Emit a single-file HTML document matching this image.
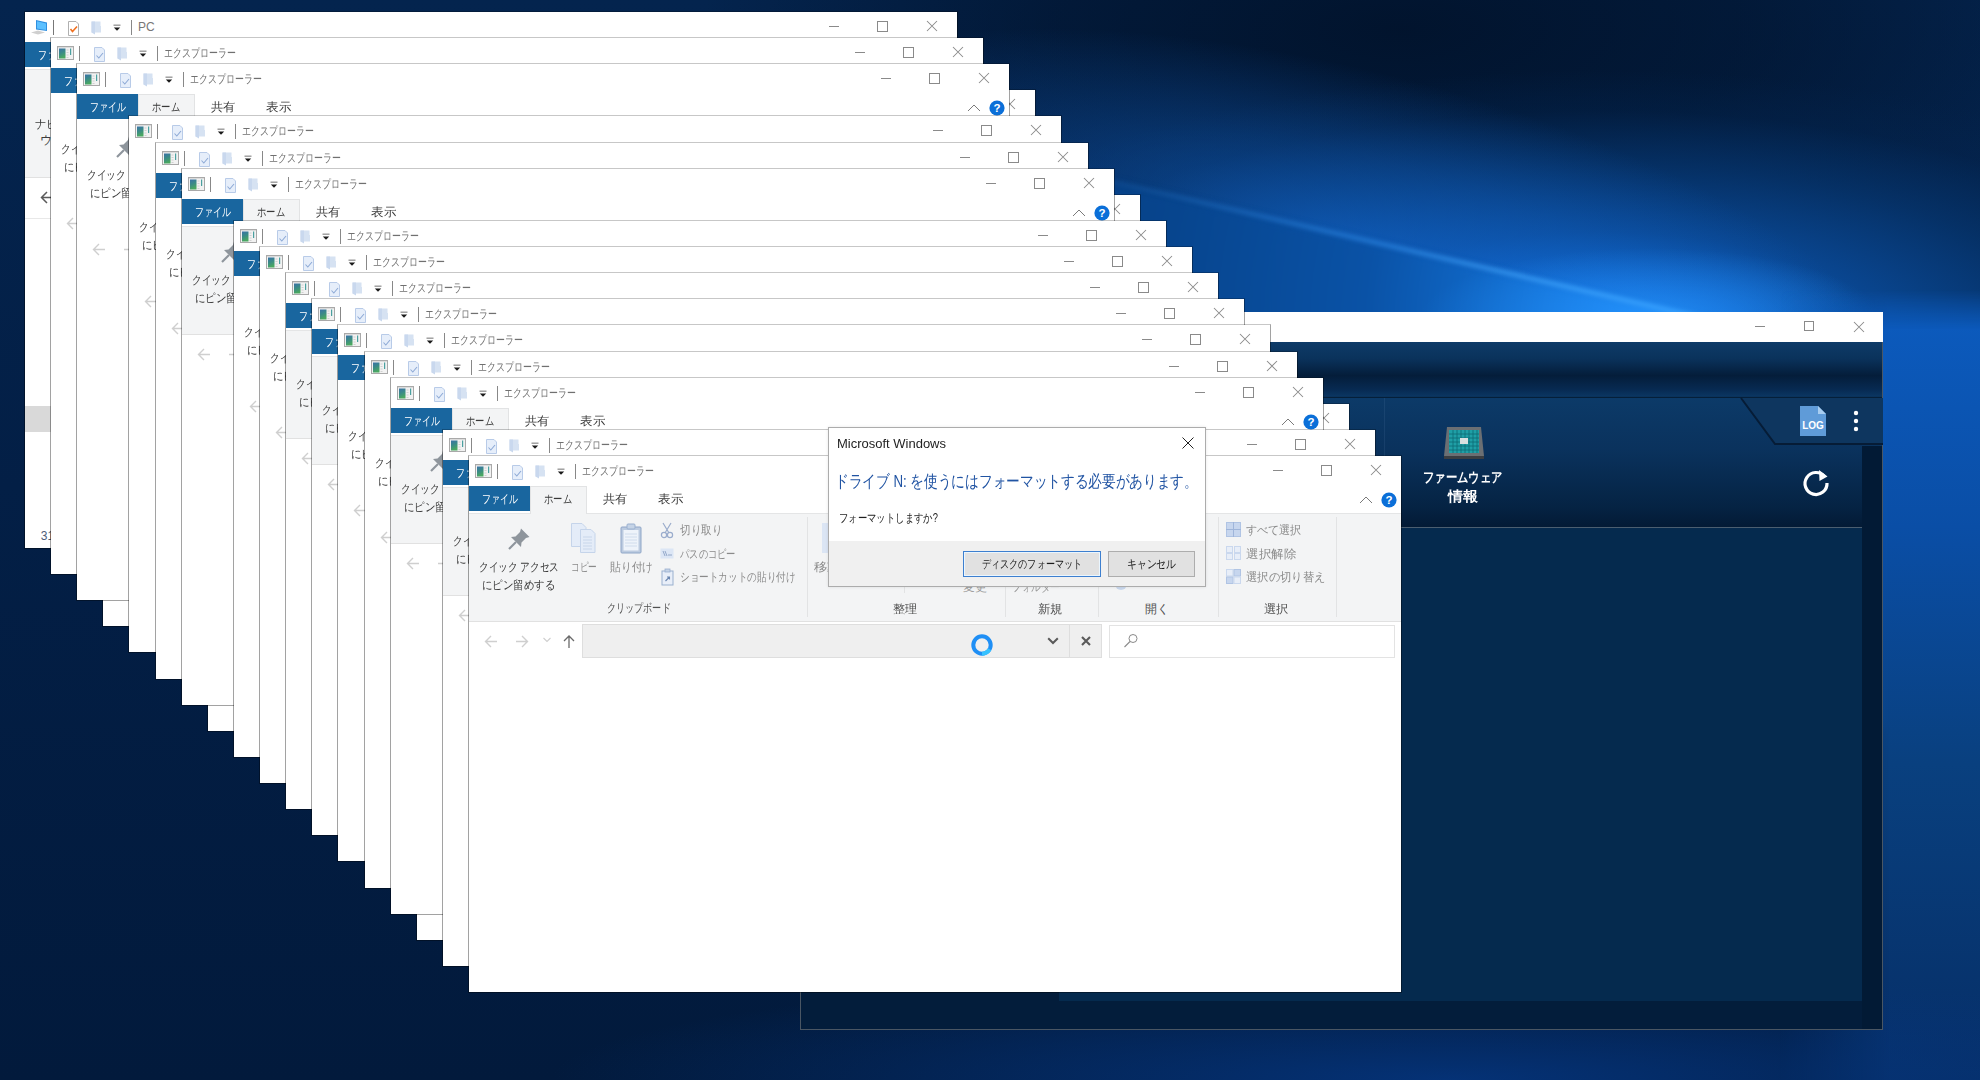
<!DOCTYPE html>
<html lang="ja"><head><meta charset="utf-8"><title>Explorer cascade</title>
<style>
html,body{margin:0;padding:0;width:1980px;height:1080px;overflow:hidden;background:#021a3d;font-family:"Liberation Sans",sans-serif}
.a{position:absolute}
.t{position:absolute;white-space:nowrap;display:block}
.win{position:absolute;width:934px;height:538px;overflow:hidden}
.in{position:absolute;left:1px;top:1px;width:932px;height:536px;overflow:hidden;background:#fff}
.bd{position:absolute;left:0;top:0;right:0;bottom:0;border:1px solid rgba(0,0,0,0.36);border-top-color:rgba(0,0,0,0.22);box-sizing:border-box;pointer-events:none}
svg{overflow:visible}
</style></head><body>
<svg width="0" height="0" style="position:absolute"><defs><linearGradient id="eg" x1="0" y1="0" x2="0.3" y2="1"><stop offset="0" stop-color="#3a72a8"/><stop offset="0.5" stop-color="#3a8a88"/><stop offset="1" stop-color="#4aa860"/></linearGradient></defs></svg>
<div class="a" style="left:0;top:0;width:1980px;height:1080px;background:linear-gradient(180deg,#04244e 0%,#031f46 45%,#021a3c 100%)"></div><div class="a" style="left:0;top:0;width:1980px;height:1080px;background:radial-gradient(ellipse 700px 260px at 1400px 30px,rgba(1,18,42,0.9) 0%,rgba(1,18,42,0.6) 50%,rgba(1,18,42,0) 100%)"></div><div class="a" style="left:0;top:0;width:1980px;height:1080px;background:radial-gradient(ellipse 720px 270px at 1600px 340px,rgba(26,136,240,1) 0%,rgba(15,104,208,0.95) 20%,rgba(10,74,152,0.9) 40%,rgba(6,54,112,0.75) 65%,rgba(3,36,78,0.4) 85%,rgba(2,27,62,0) 100%)"></div><div class="a" style="left:800px;top:60px;width:1100px;height:360px;transform:rotate(14deg);background:radial-gradient(ellipse 550px 170px at 50% 50%,rgba(20,110,220,0.55) 0%,rgba(20,110,220,0.3) 50%,rgba(20,110,220,0) 100%)"></div><div class="a" style="left:0;top:0;width:1980px;height:1080px;filter:blur(4px)"><div class="a" style="left:0;top:0;width:1980px;height:1080px;clip-path:polygon(1040px 166px,1730px 326px,1990px 360px,1990px 760px,1600px 640px,1100px 360px);background:radial-gradient(circle 800px at 1700px 326px,#1e90ff 0%,#1478e0 16%,#0a52a6 42%,#07458e 67%,#063a7a 100%)"></div></div><div class="a" style="left:0;top:0;width:1980px;height:1080px;filter:blur(2px)"><div class="a" style="left:0;top:0;width:1980px;height:1080px;clip-path:polygon(1040px 163px,1730px 322px,1730px 327px,1040px 167px);background:linear-gradient(90deg,rgba(60,160,255,0) 52%,rgba(60,160,255,0.45) 70%,rgba(80,180,255,0.9) 87%)"></div></div><div class="a" style="left:0;top:0;width:1980px;height:1080px;background:radial-gradient(ellipse 230px 70px at 1650px 318px,rgba(40,150,255,0.65) 0%,rgba(40,150,255,0) 100%)"></div><div class="a" style="left:1780px;top:290px;width:200px;height:790px;-webkit-mask-image:linear-gradient(180deg,transparent 0,#000 40px);mask-image:linear-gradient(180deg,transparent 0,#000 40px)"><div class="a" style="left:0;top:0;width:200px;height:790px;background:linear-gradient(180deg,#0c5cc0 0%,#0a4ea6 30%,#09407f 60%,#062e66 100%);-webkit-mask-image:linear-gradient(90deg,transparent 0,#000 110px);mask-image:linear-gradient(90deg,transparent 0,#000 110px)"></div></div><div class="a" style="left:0;top:0;width:1980px;height:1080px;background:radial-gradient(ellipse 900px 110px at 1450px 1080px,rgba(5,54,128,0.85) 0%,rgba(4,40,100,0) 100%)"></div><div class="a" style="left:800px;top:312px;width:1083px;height:718px;background:#031d3b;z-index:5;box-sizing:border-box;border:1px solid #4a5663;border-top:none"><div class="a" style="left:-1px;top:0px;width:1083px;height:30px;background:#fff"></div><div class="a" style="left:954px;top:14px;width:10px;height:1px;background:#8a8a8a"></div><div class="a" style="left:1003px;top:9px;width:10px;height:10px;border:1px solid #8a8a8a;box-sizing:border-box"></div><svg class="a" style="left:1052px;top:9px;" width="12" height="12" viewBox="0 0 12 12"><path d="M1 1 L11 11 M11 1 L1 11" stroke="#8a8a8a" stroke-width="1.05"/></svg><div class="a" style="left:0px;top:30px;width:1081px;height:56px;background:linear-gradient(#0e3b68 0%,#0a325b 30%,#041d3a 60%,#072a52 85%,#0b3662 97%,#021528 100%)"></div><div class="a" style="left:0px;top:86px;width:1081px;height:129px;background:linear-gradient(#0c3a68 0%,#0a325d 40%,#052343 85%,#031a35 100%)"></div><svg class="a" style="left:940px;top:86px;" width="142" height="48" viewBox="0 0 142 48"><path d="M0 0 L34 46 L142 46 L142 0 Z" fill="#0e365f"/><path d="M0 0 L34 46 L142 46" fill="none" stroke="#061c36" stroke-width="2"/></svg><svg class="a" style="left:998px;top:93px;" width="28" height="32" viewBox="0 0 28 32"><path d="M1 1 H19 L27 9 V31 H1 Z" fill="#5f9bd8"/><path d="M19 1 V9 H27 Z" fill="#a8cdf0"/><text x="14" y="24" text-anchor="middle" font-size="10" font-weight="700" fill="#fff" font-family="Liberation Sans">LOG</text></svg><svg class="a" style="left:1049px;top:96px;" width="12" height="26" viewBox="0 0 12 26"><circle cx="6" cy="5" r="2.2" fill="#fff"/><circle cx="6" cy="13" r="2.2" fill="#fff"/><circle cx="6" cy="21" r="2.2" fill="#fff"/></svg><div class="a" style="left:1061px;top:134px;width:20px;height:583px;background:#021a35"></div><svg class="a" style="left:999px;top:155px;" width="32" height="32" viewBox="0 0 32 32"><path d="M24.5 9.5 A11 11 0 1 0 27 16" fill="none" stroke="#fff" stroke-width="3.2"/><path d="M19 3 L27.5 9.5 L19.5 14 Z" fill="#fff"/></svg><svg class="a" style="left:642px;top:114px;" width="42" height="34" viewBox="0 0 42 34"><path d="M4 1 H38 L41 30 H1 Z" fill="#6b6f73"/><path d="M1 30 H41 V33 H1Z" fill="#3b3e42"/><rect x="6" y="4" width="30" height="23" fill="#1f9fa6"/><path d="M6 8 H36 M6 12 H36 M6 16 H36 M6 20 H36 M6 24 H36 M10 4 V27 M14 4 V27 M18 4 V27 M22 4 V27 M26 4 V27 M30 4 V27 M34 4 V27" stroke="#0d6b74" stroke-width="0.8"/><rect x="17" y="12" width="8" height="6" fill="#d8e0e0"/></svg><div class="a" style="left:583px;top:86px;width:1px;height:129px;background:rgba(120,160,200,0.12)"></div><div class="a" style="left:0px;top:215px;width:1061px;height:1px;background:#4b5e70"></div><div class="a" style="left:258px;top:216px;width:803px;height:473px;background:#052a4e"></div></div><span class="t" style="left:1423.2px;top:468.0px;font-size:14px;line-height:18px;color:#fff;font-weight:700;transform-origin:0 50%;transform:scaleX(0.811);z-index:6;">ファームウェア</span><span class="t" style="left:1448.0px;top:486.5px;font-size:14px;line-height:18px;color:#fff;font-weight:700;transform-origin:0 50%;transform:scaleX(1.071);z-index:6;">情報</span><div class="win" style="left:24px;top:11px;z-index:10"><div class="in"><svg class="a" style="left:5px;top:7px;" width="20" height="16" viewBox="0 0 20 16"><path d="M6 1 L17 3.5 L17 12 L6 10.5 Z" fill="#2f8fe0"/><path d="M7 2.3 L16 4.4 L16 11 L7 9.6Z" fill="#5cc0ff"/><path d="M1 13.5 L8 11.5 L15 13.5 L8 15.5 Z" fill="#cfcfcf"/></svg><div class="a" style="left:28px;top:8px;width:1px;height:15px;background:#777"></div><svg class="a" style="left:42px;top:8px;" width="13" height="17" viewBox="0 0 13 17"><path d="M1.5 1.5 H9 L11.5 4 V15.5 H1.5 Z" fill="#fff" stroke="#b0b0b0"/><path d="M3.5 9 L5.5 11.5 L10 6.5" fill="none" stroke="#f07020" stroke-width="1.6"/></svg><svg class="a" style="left:65px;top:8px;" width="12" height="17" viewBox="0 0 12 17"><path d="M1.5 1.5 H10.5 V6 H11 V12.5 H1.5 Z" fill="#d6e2f2"/><path d="M1.5 1.5 H5 V14.5 L1.5 12.5 Z" fill="#c9d8ee"/></svg><svg class="a" style="left:88px;top:12px;" width="8" height="8" viewBox="0 0 8 8"><rect x="0.5" y="0.5" width="7" height="1.4" fill="#9a9a9a"/><path d="M0.8 3.5 H7.2 L4 6.8 Z" fill="#1a1a1a"/></svg><div class="a" style="left:106px;top:8px;width:1px;height:15px;background:#888"></div><span class="t" style="left:113.0px;top:7.5px;font-size:12px;line-height:15px;color:#777;">PC</span><div class="a" style="left:804px;top:14px;width:10px;height:1px;background:#8a8a8a"></div><div class="a" style="left:852px;top:9px;width:11px;height:11px;border:1px solid #8a8a8a;box-sizing:border-box"></div><svg class="a" style="left:901px;top:8px;" width="12" height="12" viewBox="0 0 12 12"><path d="M1 1 L11 11 M11 1 L1 11" stroke="#8a8a8a" stroke-width="1.05"/></svg><div class="a" style="left:0px;top:30px;width:61px;height:25px;background:#19669f"></div><span class="t" style="left:13.0px;top:36.0px;font-size:12px;line-height:15px;color:#fff;transform-origin:0 50%;transform:scaleX(0.744);">ファイル</span><div class="a" style="left:0px;top:57px;width:932px;height:109px;background:#f3f4f5;border-top:1px solid #e4e5e6;border-bottom:1px solid #e1e1e1;box-sizing:border-box"></div><span class="t" style="left:10.3px;top:105.1px;font-size:12px;line-height:15px;color:#3c3c3c;transform-origin:0 50%;transform:scaleX(0.952);">ナビゲーション</span><span class="t" style="left:15.3px;top:121.3px;font-size:12px;line-height:15px;color:#3c3c3c;">ウィンドウ</span><svg class="a" style="left:15px;top:179px;" width="14" height="13" viewBox="0 0 14 13"><path d="M1.5 6.5 H13 M7 1 L1.5 6.5 L7 12" fill="none" stroke="#5a5a5a" stroke-width="1.5"/></svg><div class="a" style="left:0px;top:206px;width:932px;height:1px;background:#e8e8e8"></div><svg class="a" style="left:46px;top:179px;" width="14" height="13" viewBox="0 0 14 13"><path d="M12.5 6.5 H1 M7 1 L12.5 6.5 L7 12" fill="none" stroke="#c8c8c8" stroke-width="1.4"/></svg><div class="a" style="left:0px;top:394px;width:200px;height:26px;background:#d9d9d9"></div><span class="t" style="left:15.8px;top:517.2px;font-size:12px;line-height:15px;color:#4c5c78;">31 個の項目</span></div><div class="bd"></div></div><div class="win" style="left:50px;top:37px;z-index:11"><div class="in"><svg class="a" style="left:5px;top:7px;" width="18" height="16" viewBox="0 0 18 16"><rect x="1.5" y="1.5" width="16" height="13" fill="#f2f2f2" stroke="#a9a9a9"/><rect x="2" y="2" width="15" height="1" fill="#dcdcdc"/><rect x="3" y="3.5" width="6.5" height="10" fill="url(#eg)"/><rect x="14" y="3.5" width="1.2" height="6.5" fill="#4aa0a0"/><path d="M10.5 5 H12.5 M10.5 7.5 H12.5 M10.5 10 H12.5 M10.5 12.5 H12.5" stroke="#c8c8c8" stroke-width="0.8"/></svg><div class="a" style="left:28px;top:8px;width:1px;height:15px;background:#888"></div><svg class="a" style="left:42px;top:8px;" width="13" height="17" viewBox="0 0 13 17"><path d="M1.5 1.5 H9 L11.5 4 V15.5 H1.5 Z" fill="#e6eefa" stroke="#b8cbe8"/><path d="M3.5 9.5 L5.8 12 L10 7" fill="none" stroke="#8eaad6" stroke-width="1.1"/></svg><svg class="a" style="left:65px;top:8px;" width="12" height="17" viewBox="0 0 12 17"><path d="M1.5 1.5 H10.5 V6 H11 V12.5 H1.5 Z" fill="#d6e2f2"/><path d="M1.5 1.5 H5 V14.5 L1.5 12.5 Z" fill="#c9d8ee"/></svg><svg class="a" style="left:88px;top:12px;" width="8" height="8" viewBox="0 0 8 8"><rect x="0.5" y="0.5" width="7" height="1.4" fill="#9a9a9a"/><path d="M0.8 3.5 H7.2 L4 6.8 Z" fill="#1a1a1a"/></svg><div class="a" style="left:106px;top:8px;width:1px;height:15px;background:#888"></div><span class="t" style="left:113.0px;top:7.5px;font-size:12px;line-height:15px;color:#707070;transform-origin:0 50%;transform:scaleX(0.745);">エクスプローラー</span><div class="a" style="left:804px;top:14px;width:10px;height:1px;background:#8a8a8a"></div><div class="a" style="left:852px;top:9px;width:11px;height:11px;border:1px solid #8a8a8a;box-sizing:border-box"></div><svg class="a" style="left:901px;top:8px;" width="12" height="12" viewBox="0 0 12 12"><path d="M1 1 L11 11 M11 1 L1 11" stroke="#8a8a8a" stroke-width="1.05"/></svg><div class="a" style="left:0px;top:30px;width:61px;height:25px;background:#19669f"></div><span class="t" style="left:13.0px;top:36.0px;font-size:12px;line-height:15px;color:#fff;transform-origin:0 50%;transform:scaleX(0.744);">ファイル</span><span class="t" style="left:9.6px;top:104.2px;font-size:12px;line-height:15px;color:#3a3a3a;transform-origin:0 50%;transform:scaleX(0.805);">クイック アクセス</span><span class="t" style="left:13.0px;top:121.5px;font-size:12px;line-height:15px;color:#3a3a3a;transform-origin:0 50%;transform:scaleX(0.869);">にピン留めする</span><svg class="a" style="left:38px;top:71px;" width="24" height="24" viewBox="0 0 24 24"><path d="M14 1.5 L22.5 10 L19 11 L14.5 15.5 L14 20 L4 10 L8.5 9.5 L13 5 Z" fill="#8e959c"/><path d="M9 15 L2 22" stroke="#8e959c" stroke-width="2.2"/></svg><svg class="a" style="left:15px;top:179px;" width="14" height="13" viewBox="0 0 14 13"><path d="M1.5 6.5 H13 M7 1 L1.5 6.5 L7 12" fill="none" stroke="#cfcfcf" stroke-width="1.4"/></svg><svg class="a" style="left:46px;top:179px;" width="14" height="13" viewBox="0 0 14 13"><path d="M12.5 6.5 H1 M7 1 L12.5 6.5 L7 12" fill="none" stroke="#cfcfcf" stroke-width="1.4"/></svg></div><div class="bd"></div></div><div class="win" style="left:102px;top:89px;z-index:12"><div class="in"><svg class="a" style="left:5px;top:7px;" width="18" height="16" viewBox="0 0 18 16"><rect x="1.5" y="1.5" width="16" height="13" fill="#f2f2f2" stroke="#a9a9a9"/><rect x="2" y="2" width="15" height="1" fill="#dcdcdc"/><rect x="3" y="3.5" width="6.5" height="10" fill="url(#eg)"/><rect x="14" y="3.5" width="1.2" height="6.5" fill="#4aa0a0"/><path d="M10.5 5 H12.5 M10.5 7.5 H12.5 M10.5 10 H12.5 M10.5 12.5 H12.5" stroke="#c8c8c8" stroke-width="0.8"/></svg><div class="a" style="left:28px;top:8px;width:1px;height:15px;background:#888"></div><svg class="a" style="left:42px;top:8px;" width="13" height="17" viewBox="0 0 13 17"><path d="M1.5 1.5 H9 L11.5 4 V15.5 H1.5 Z" fill="#e6eefa" stroke="#b8cbe8"/><path d="M3.5 9.5 L5.8 12 L10 7" fill="none" stroke="#8eaad6" stroke-width="1.1"/></svg><svg class="a" style="left:65px;top:8px;" width="12" height="17" viewBox="0 0 12 17"><path d="M1.5 1.5 H10.5 V6 H11 V12.5 H1.5 Z" fill="#d6e2f2"/><path d="M1.5 1.5 H5 V14.5 L1.5 12.5 Z" fill="#c9d8ee"/></svg><svg class="a" style="left:88px;top:12px;" width="8" height="8" viewBox="0 0 8 8"><rect x="0.5" y="0.5" width="7" height="1.4" fill="#9a9a9a"/><path d="M0.8 3.5 H7.2 L4 6.8 Z" fill="#1a1a1a"/></svg><div class="a" style="left:106px;top:8px;width:1px;height:15px;background:#888"></div><span class="t" style="left:113.0px;top:7.5px;font-size:12px;line-height:15px;color:#707070;transform-origin:0 50%;transform:scaleX(0.745);">エクスプローラー</span><div class="a" style="left:804px;top:14px;width:10px;height:1px;background:#8a8a8a"></div><div class="a" style="left:852px;top:9px;width:11px;height:11px;border:1px solid #8a8a8a;box-sizing:border-box"></div><svg class="a" style="left:901px;top:8px;" width="12" height="12" viewBox="0 0 12 12"><path d="M1 1 L11 11 M11 1 L1 11" stroke="#8a8a8a" stroke-width="1.05"/></svg><div class="a" style="left:0px;top:30px;width:61px;height:25px;background:#19669f"></div><span class="t" style="left:13.0px;top:36.0px;font-size:12px;line-height:15px;color:#fff;transform-origin:0 50%;transform:scaleX(0.744);">ファイル</span><span class="t" style="left:9.6px;top:104.2px;font-size:12px;line-height:15px;color:#3a3a3a;transform-origin:0 50%;transform:scaleX(0.805);">クイック アクセス</span><span class="t" style="left:13.0px;top:121.5px;font-size:12px;line-height:15px;color:#3a3a3a;transform-origin:0 50%;transform:scaleX(0.869);">にピン留めする</span><svg class="a" style="left:38px;top:71px;" width="24" height="24" viewBox="0 0 24 24"><path d="M14 1.5 L22.5 10 L19 11 L14.5 15.5 L14 20 L4 10 L8.5 9.5 L13 5 Z" fill="#8e959c"/><path d="M9 15 L2 22" stroke="#8e959c" stroke-width="2.2"/></svg><svg class="a" style="left:15px;top:179px;" width="14" height="13" viewBox="0 0 14 13"><path d="M1.5 6.5 H13 M7 1 L1.5 6.5 L7 12" fill="none" stroke="#cfcfcf" stroke-width="1.4"/></svg><svg class="a" style="left:46px;top:179px;" width="14" height="13" viewBox="0 0 14 13"><path d="M12.5 6.5 H1 M7 1 L12.5 6.5 L7 12" fill="none" stroke="#cfcfcf" stroke-width="1.4"/></svg></div><div class="bd"></div></div><div class="win" style="left:76px;top:63px;z-index:13"><div class="in"><svg class="a" style="left:5px;top:7px;" width="18" height="16" viewBox="0 0 18 16"><rect x="1.5" y="1.5" width="16" height="13" fill="#f2f2f2" stroke="#a9a9a9"/><rect x="2" y="2" width="15" height="1" fill="#dcdcdc"/><rect x="3" y="3.5" width="6.5" height="10" fill="url(#eg)"/><rect x="14" y="3.5" width="1.2" height="6.5" fill="#4aa0a0"/><path d="M10.5 5 H12.5 M10.5 7.5 H12.5 M10.5 10 H12.5 M10.5 12.5 H12.5" stroke="#c8c8c8" stroke-width="0.8"/></svg><div class="a" style="left:28px;top:8px;width:1px;height:15px;background:#888"></div><svg class="a" style="left:42px;top:8px;" width="13" height="17" viewBox="0 0 13 17"><path d="M1.5 1.5 H9 L11.5 4 V15.5 H1.5 Z" fill="#e6eefa" stroke="#b8cbe8"/><path d="M3.5 9.5 L5.8 12 L10 7" fill="none" stroke="#8eaad6" stroke-width="1.1"/></svg><svg class="a" style="left:65px;top:8px;" width="12" height="17" viewBox="0 0 12 17"><path d="M1.5 1.5 H10.5 V6 H11 V12.5 H1.5 Z" fill="#d6e2f2"/><path d="M1.5 1.5 H5 V14.5 L1.5 12.5 Z" fill="#c9d8ee"/></svg><svg class="a" style="left:88px;top:12px;" width="8" height="8" viewBox="0 0 8 8"><rect x="0.5" y="0.5" width="7" height="1.4" fill="#9a9a9a"/><path d="M0.8 3.5 H7.2 L4 6.8 Z" fill="#1a1a1a"/></svg><div class="a" style="left:106px;top:8px;width:1px;height:15px;background:#888"></div><span class="t" style="left:113.0px;top:7.5px;font-size:12px;line-height:15px;color:#707070;transform-origin:0 50%;transform:scaleX(0.745);">エクスプローラー</span><div class="a" style="left:804px;top:14px;width:10px;height:1px;background:#8a8a8a"></div><div class="a" style="left:852px;top:9px;width:11px;height:11px;border:1px solid #8a8a8a;box-sizing:border-box"></div><svg class="a" style="left:901px;top:8px;" width="12" height="12" viewBox="0 0 12 12"><path d="M1 1 L11 11 M11 1 L1 11" stroke="#8a8a8a" stroke-width="1.05"/></svg><div class="a" style="left:0px;top:30px;width:61px;height:25px;background:#19669f"></div><span class="t" style="left:13.0px;top:36.0px;font-size:12px;line-height:15px;color:#fff;transform-origin:0 50%;transform:scaleX(0.744);">ファイル</span><div class="a" style="left:61px;top:30px;width:57px;height:28px;background:#f3f4f5;border:1px solid #e2e3e4;border-bottom:none;box-sizing:border-box"></div><span class="t" style="left:75.4px;top:36.2px;font-size:12px;line-height:15px;color:#383838;transform-origin:0 50%;transform:scaleX(0.778);">ホーム</span><span class="t" style="left:134.0px;top:36.2px;font-size:12px;line-height:15px;color:#383838;transform-origin:0 50%;transform:scaleX(1.017);">共有</span><span class="t" style="left:189.3px;top:36.2px;font-size:12px;line-height:15px;color:#383838;transform-origin:0 50%;transform:scaleX(1.042);">表示</span><svg class="a" style="left:890px;top:40px;" width="14" height="8" viewBox="0 0 14 8"><path d="M1 7 L7 1 L13 7" fill="none" stroke="#7a7a7a" stroke-width="1"/></svg><svg class="a" style="left:912px;top:35.5px;" width="16" height="16" viewBox="0 0 16 16"><circle cx="8" cy="8" r="7.6" fill="#0b6fd8"/><text x="8" y="12.3" text-anchor="middle" font-size="11.5" font-weight="700" fill="#fff" font-family="Liberation Sans">?</text></svg><span class="t" style="left:9.6px;top:104.2px;font-size:12px;line-height:15px;color:#3a3a3a;transform-origin:0 50%;transform:scaleX(0.805);">クイック アクセス</span><span class="t" style="left:13.0px;top:121.5px;font-size:12px;line-height:15px;color:#3a3a3a;transform-origin:0 50%;transform:scaleX(0.869);">にピン留めする</span><svg class="a" style="left:38px;top:71px;" width="24" height="24" viewBox="0 0 24 24"><path d="M14 1.5 L22.5 10 L19 11 L14.5 15.5 L14 20 L4 10 L8.5 9.5 L13 5 Z" fill="#8e959c"/><path d="M9 15 L2 22" stroke="#8e959c" stroke-width="2.2"/></svg><svg class="a" style="left:15px;top:179px;" width="14" height="13" viewBox="0 0 14 13"><path d="M1.5 6.5 H13 M7 1 L1.5 6.5 L7 12" fill="none" stroke="#cfcfcf" stroke-width="1.4"/></svg><svg class="a" style="left:46px;top:179px;" width="14" height="13" viewBox="0 0 14 13"><path d="M12.5 6.5 H1 M7 1 L12.5 6.5 L7 12" fill="none" stroke="#cfcfcf" stroke-width="1.4"/></svg></div><div class="bd"></div></div><div class="win" style="left:128px;top:115px;z-index:14"><div class="in"><svg class="a" style="left:5px;top:7px;" width="18" height="16" viewBox="0 0 18 16"><rect x="1.5" y="1.5" width="16" height="13" fill="#f2f2f2" stroke="#a9a9a9"/><rect x="2" y="2" width="15" height="1" fill="#dcdcdc"/><rect x="3" y="3.5" width="6.5" height="10" fill="url(#eg)"/><rect x="14" y="3.5" width="1.2" height="6.5" fill="#4aa0a0"/><path d="M10.5 5 H12.5 M10.5 7.5 H12.5 M10.5 10 H12.5 M10.5 12.5 H12.5" stroke="#c8c8c8" stroke-width="0.8"/></svg><div class="a" style="left:28px;top:8px;width:1px;height:15px;background:#888"></div><svg class="a" style="left:42px;top:8px;" width="13" height="17" viewBox="0 0 13 17"><path d="M1.5 1.5 H9 L11.5 4 V15.5 H1.5 Z" fill="#e6eefa" stroke="#b8cbe8"/><path d="M3.5 9.5 L5.8 12 L10 7" fill="none" stroke="#8eaad6" stroke-width="1.1"/></svg><svg class="a" style="left:65px;top:8px;" width="12" height="17" viewBox="0 0 12 17"><path d="M1.5 1.5 H10.5 V6 H11 V12.5 H1.5 Z" fill="#d6e2f2"/><path d="M1.5 1.5 H5 V14.5 L1.5 12.5 Z" fill="#c9d8ee"/></svg><svg class="a" style="left:88px;top:12px;" width="8" height="8" viewBox="0 0 8 8"><rect x="0.5" y="0.5" width="7" height="1.4" fill="#9a9a9a"/><path d="M0.8 3.5 H7.2 L4 6.8 Z" fill="#1a1a1a"/></svg><div class="a" style="left:106px;top:8px;width:1px;height:15px;background:#888"></div><span class="t" style="left:113.0px;top:7.5px;font-size:12px;line-height:15px;color:#707070;transform-origin:0 50%;transform:scaleX(0.745);">エクスプローラー</span><div class="a" style="left:804px;top:14px;width:10px;height:1px;background:#8a8a8a"></div><div class="a" style="left:852px;top:9px;width:11px;height:11px;border:1px solid #8a8a8a;box-sizing:border-box"></div><svg class="a" style="left:901px;top:8px;" width="12" height="12" viewBox="0 0 12 12"><path d="M1 1 L11 11 M11 1 L1 11" stroke="#8a8a8a" stroke-width="1.05"/></svg><span class="t" style="left:9.6px;top:104.2px;font-size:12px;line-height:15px;color:#3a3a3a;transform-origin:0 50%;transform:scaleX(0.805);">クイック アクセス</span><span class="t" style="left:13.0px;top:121.5px;font-size:12px;line-height:15px;color:#3a3a3a;transform-origin:0 50%;transform:scaleX(0.869);">にピン留めする</span><svg class="a" style="left:38px;top:71px;" width="24" height="24" viewBox="0 0 24 24"><path d="M14 1.5 L22.5 10 L19 11 L14.5 15.5 L14 20 L4 10 L8.5 9.5 L13 5 Z" fill="#8e959c"/><path d="M9 15 L2 22" stroke="#8e959c" stroke-width="2.2"/></svg><svg class="a" style="left:15px;top:179px;" width="14" height="13" viewBox="0 0 14 13"><path d="M1.5 6.5 H13 M7 1 L1.5 6.5 L7 12" fill="none" stroke="#cfcfcf" stroke-width="1.4"/></svg><svg class="a" style="left:46px;top:179px;" width="14" height="13" viewBox="0 0 14 13"><path d="M12.5 6.5 H1 M7 1 L12.5 6.5 L7 12" fill="none" stroke="#cfcfcf" stroke-width="1.4"/></svg></div><div class="bd"></div></div><div class="win" style="left:155px;top:142px;z-index:15"><div class="in"><svg class="a" style="left:5px;top:7px;" width="18" height="16" viewBox="0 0 18 16"><rect x="1.5" y="1.5" width="16" height="13" fill="#f2f2f2" stroke="#a9a9a9"/><rect x="2" y="2" width="15" height="1" fill="#dcdcdc"/><rect x="3" y="3.5" width="6.5" height="10" fill="url(#eg)"/><rect x="14" y="3.5" width="1.2" height="6.5" fill="#4aa0a0"/><path d="M10.5 5 H12.5 M10.5 7.5 H12.5 M10.5 10 H12.5 M10.5 12.5 H12.5" stroke="#c8c8c8" stroke-width="0.8"/></svg><div class="a" style="left:28px;top:8px;width:1px;height:15px;background:#888"></div><svg class="a" style="left:42px;top:8px;" width="13" height="17" viewBox="0 0 13 17"><path d="M1.5 1.5 H9 L11.5 4 V15.5 H1.5 Z" fill="#e6eefa" stroke="#b8cbe8"/><path d="M3.5 9.5 L5.8 12 L10 7" fill="none" stroke="#8eaad6" stroke-width="1.1"/></svg><svg class="a" style="left:65px;top:8px;" width="12" height="17" viewBox="0 0 12 17"><path d="M1.5 1.5 H10.5 V6 H11 V12.5 H1.5 Z" fill="#d6e2f2"/><path d="M1.5 1.5 H5 V14.5 L1.5 12.5 Z" fill="#c9d8ee"/></svg><svg class="a" style="left:88px;top:12px;" width="8" height="8" viewBox="0 0 8 8"><rect x="0.5" y="0.5" width="7" height="1.4" fill="#9a9a9a"/><path d="M0.8 3.5 H7.2 L4 6.8 Z" fill="#1a1a1a"/></svg><div class="a" style="left:106px;top:8px;width:1px;height:15px;background:#888"></div><span class="t" style="left:113.0px;top:7.5px;font-size:12px;line-height:15px;color:#707070;transform-origin:0 50%;transform:scaleX(0.745);">エクスプローラー</span><div class="a" style="left:804px;top:14px;width:10px;height:1px;background:#8a8a8a"></div><div class="a" style="left:852px;top:9px;width:11px;height:11px;border:1px solid #8a8a8a;box-sizing:border-box"></div><svg class="a" style="left:901px;top:8px;" width="12" height="12" viewBox="0 0 12 12"><path d="M1 1 L11 11 M11 1 L1 11" stroke="#8a8a8a" stroke-width="1.05"/></svg><div class="a" style="left:0px;top:30px;width:61px;height:25px;background:#19669f"></div><span class="t" style="left:13.0px;top:36.0px;font-size:12px;line-height:15px;color:#fff;transform-origin:0 50%;transform:scaleX(0.744);">ファイル</span><span class="t" style="left:9.6px;top:104.2px;font-size:12px;line-height:15px;color:#3a3a3a;transform-origin:0 50%;transform:scaleX(0.805);">クイック アクセス</span><span class="t" style="left:13.0px;top:121.5px;font-size:12px;line-height:15px;color:#3a3a3a;transform-origin:0 50%;transform:scaleX(0.869);">にピン留めする</span><svg class="a" style="left:38px;top:71px;" width="24" height="24" viewBox="0 0 24 24"><path d="M14 1.5 L22.5 10 L19 11 L14.5 15.5 L14 20 L4 10 L8.5 9.5 L13 5 Z" fill="#8e959c"/><path d="M9 15 L2 22" stroke="#8e959c" stroke-width="2.2"/></svg><svg class="a" style="left:15px;top:179px;" width="14" height="13" viewBox="0 0 14 13"><path d="M1.5 6.5 H13 M7 1 L1.5 6.5 L7 12" fill="none" stroke="#cfcfcf" stroke-width="1.4"/></svg><svg class="a" style="left:46px;top:179px;" width="14" height="13" viewBox="0 0 14 13"><path d="M12.5 6.5 H1 M7 1 L12.5 6.5 L7 12" fill="none" stroke="#cfcfcf" stroke-width="1.4"/></svg></div><div class="bd"></div></div><div class="win" style="left:207px;top:194px;z-index:16"><div class="in"><svg class="a" style="left:5px;top:7px;" width="18" height="16" viewBox="0 0 18 16"><rect x="1.5" y="1.5" width="16" height="13" fill="#f2f2f2" stroke="#a9a9a9"/><rect x="2" y="2" width="15" height="1" fill="#dcdcdc"/><rect x="3" y="3.5" width="6.5" height="10" fill="url(#eg)"/><rect x="14" y="3.5" width="1.2" height="6.5" fill="#4aa0a0"/><path d="M10.5 5 H12.5 M10.5 7.5 H12.5 M10.5 10 H12.5 M10.5 12.5 H12.5" stroke="#c8c8c8" stroke-width="0.8"/></svg><div class="a" style="left:28px;top:8px;width:1px;height:15px;background:#888"></div><svg class="a" style="left:42px;top:8px;" width="13" height="17" viewBox="0 0 13 17"><path d="M1.5 1.5 H9 L11.5 4 V15.5 H1.5 Z" fill="#e6eefa" stroke="#b8cbe8"/><path d="M3.5 9.5 L5.8 12 L10 7" fill="none" stroke="#8eaad6" stroke-width="1.1"/></svg><svg class="a" style="left:65px;top:8px;" width="12" height="17" viewBox="0 0 12 17"><path d="M1.5 1.5 H10.5 V6 H11 V12.5 H1.5 Z" fill="#d6e2f2"/><path d="M1.5 1.5 H5 V14.5 L1.5 12.5 Z" fill="#c9d8ee"/></svg><svg class="a" style="left:88px;top:12px;" width="8" height="8" viewBox="0 0 8 8"><rect x="0.5" y="0.5" width="7" height="1.4" fill="#9a9a9a"/><path d="M0.8 3.5 H7.2 L4 6.8 Z" fill="#1a1a1a"/></svg><div class="a" style="left:106px;top:8px;width:1px;height:15px;background:#888"></div><span class="t" style="left:113.0px;top:7.5px;font-size:12px;line-height:15px;color:#707070;transform-origin:0 50%;transform:scaleX(0.745);">エクスプローラー</span><div class="a" style="left:804px;top:14px;width:10px;height:1px;background:#8a8a8a"></div><div class="a" style="left:852px;top:9px;width:11px;height:11px;border:1px solid #8a8a8a;box-sizing:border-box"></div><svg class="a" style="left:901px;top:8px;" width="12" height="12" viewBox="0 0 12 12"><path d="M1 1 L11 11 M11 1 L1 11" stroke="#8a8a8a" stroke-width="1.05"/></svg><div class="a" style="left:0px;top:30px;width:61px;height:25px;background:#19669f"></div><span class="t" style="left:13.0px;top:36.0px;font-size:12px;line-height:15px;color:#fff;transform-origin:0 50%;transform:scaleX(0.744);">ファイル</span><span class="t" style="left:9.6px;top:104.2px;font-size:12px;line-height:15px;color:#3a3a3a;transform-origin:0 50%;transform:scaleX(0.805);">クイック アクセス</span><span class="t" style="left:13.0px;top:121.5px;font-size:12px;line-height:15px;color:#3a3a3a;transform-origin:0 50%;transform:scaleX(0.869);">にピン留めする</span><svg class="a" style="left:38px;top:71px;" width="24" height="24" viewBox="0 0 24 24"><path d="M14 1.5 L22.5 10 L19 11 L14.5 15.5 L14 20 L4 10 L8.5 9.5 L13 5 Z" fill="#8e959c"/><path d="M9 15 L2 22" stroke="#8e959c" stroke-width="2.2"/></svg><svg class="a" style="left:15px;top:179px;" width="14" height="13" viewBox="0 0 14 13"><path d="M1.5 6.5 H13 M7 1 L1.5 6.5 L7 12" fill="none" stroke="#cfcfcf" stroke-width="1.4"/></svg><svg class="a" style="left:46px;top:179px;" width="14" height="13" viewBox="0 0 14 13"><path d="M12.5 6.5 H1 M7 1 L12.5 6.5 L7 12" fill="none" stroke="#cfcfcf" stroke-width="1.4"/></svg></div><div class="bd"></div></div><div class="win" style="left:181px;top:168px;z-index:17"><div class="in"><svg class="a" style="left:5px;top:7px;" width="18" height="16" viewBox="0 0 18 16"><rect x="1.5" y="1.5" width="16" height="13" fill="#f2f2f2" stroke="#a9a9a9"/><rect x="2" y="2" width="15" height="1" fill="#dcdcdc"/><rect x="3" y="3.5" width="6.5" height="10" fill="url(#eg)"/><rect x="14" y="3.5" width="1.2" height="6.5" fill="#4aa0a0"/><path d="M10.5 5 H12.5 M10.5 7.5 H12.5 M10.5 10 H12.5 M10.5 12.5 H12.5" stroke="#c8c8c8" stroke-width="0.8"/></svg><div class="a" style="left:28px;top:8px;width:1px;height:15px;background:#888"></div><svg class="a" style="left:42px;top:8px;" width="13" height="17" viewBox="0 0 13 17"><path d="M1.5 1.5 H9 L11.5 4 V15.5 H1.5 Z" fill="#e6eefa" stroke="#b8cbe8"/><path d="M3.5 9.5 L5.8 12 L10 7" fill="none" stroke="#8eaad6" stroke-width="1.1"/></svg><svg class="a" style="left:65px;top:8px;" width="12" height="17" viewBox="0 0 12 17"><path d="M1.5 1.5 H10.5 V6 H11 V12.5 H1.5 Z" fill="#d6e2f2"/><path d="M1.5 1.5 H5 V14.5 L1.5 12.5 Z" fill="#c9d8ee"/></svg><svg class="a" style="left:88px;top:12px;" width="8" height="8" viewBox="0 0 8 8"><rect x="0.5" y="0.5" width="7" height="1.4" fill="#9a9a9a"/><path d="M0.8 3.5 H7.2 L4 6.8 Z" fill="#1a1a1a"/></svg><div class="a" style="left:106px;top:8px;width:1px;height:15px;background:#888"></div><span class="t" style="left:113.0px;top:7.5px;font-size:12px;line-height:15px;color:#707070;transform-origin:0 50%;transform:scaleX(0.745);">エクスプローラー</span><div class="a" style="left:804px;top:14px;width:10px;height:1px;background:#8a8a8a"></div><div class="a" style="left:852px;top:9px;width:11px;height:11px;border:1px solid #8a8a8a;box-sizing:border-box"></div><svg class="a" style="left:901px;top:8px;" width="12" height="12" viewBox="0 0 12 12"><path d="M1 1 L11 11 M11 1 L1 11" stroke="#8a8a8a" stroke-width="1.05"/></svg><div class="a" style="left:0px;top:30px;width:61px;height:25px;background:#19669f"></div><span class="t" style="left:13.0px;top:36.0px;font-size:12px;line-height:15px;color:#fff;transform-origin:0 50%;transform:scaleX(0.744);">ファイル</span><div class="a" style="left:0px;top:57px;width:932px;height:109px;background:#f3f4f5;border-top:1px solid #e4e5e6;border-bottom:1px solid #e1e1e1;box-sizing:border-box"></div><div class="a" style="left:61px;top:30px;width:57px;height:28px;background:#f3f4f5;border:1px solid #e2e3e4;border-bottom:none;box-sizing:border-box"></div><span class="t" style="left:75.4px;top:36.2px;font-size:12px;line-height:15px;color:#383838;transform-origin:0 50%;transform:scaleX(0.778);">ホーム</span><span class="t" style="left:134.0px;top:36.2px;font-size:12px;line-height:15px;color:#383838;transform-origin:0 50%;transform:scaleX(1.017);">共有</span><span class="t" style="left:189.3px;top:36.2px;font-size:12px;line-height:15px;color:#383838;transform-origin:0 50%;transform:scaleX(1.042);">表示</span><svg class="a" style="left:890px;top:40px;" width="14" height="8" viewBox="0 0 14 8"><path d="M1 7 L7 1 L13 7" fill="none" stroke="#7a7a7a" stroke-width="1"/></svg><svg class="a" style="left:912px;top:35.5px;" width="16" height="16" viewBox="0 0 16 16"><circle cx="8" cy="8" r="7.6" fill="#0b6fd8"/><text x="8" y="12.3" text-anchor="middle" font-size="11.5" font-weight="700" fill="#fff" font-family="Liberation Sans">?</text></svg><span class="t" style="left:9.6px;top:104.2px;font-size:12px;line-height:15px;color:#3a3a3a;transform-origin:0 50%;transform:scaleX(0.805);">クイック アクセス</span><span class="t" style="left:13.0px;top:121.5px;font-size:12px;line-height:15px;color:#3a3a3a;transform-origin:0 50%;transform:scaleX(0.869);">にピン留めする</span><svg class="a" style="left:38px;top:71px;" width="24" height="24" viewBox="0 0 24 24"><path d="M14 1.5 L22.5 10 L19 11 L14.5 15.5 L14 20 L4 10 L8.5 9.5 L13 5 Z" fill="#8e959c"/><path d="M9 15 L2 22" stroke="#8e959c" stroke-width="2.2"/></svg><svg class="a" style="left:15px;top:179px;" width="14" height="13" viewBox="0 0 14 13"><path d="M1.5 6.5 H13 M7 1 L1.5 6.5 L7 12" fill="none" stroke="#cfcfcf" stroke-width="1.4"/></svg><svg class="a" style="left:46px;top:179px;" width="14" height="13" viewBox="0 0 14 13"><path d="M12.5 6.5 H1 M7 1 L12.5 6.5 L7 12" fill="none" stroke="#cfcfcf" stroke-width="1.4"/></svg></div><div class="bd"></div></div><div class="win" style="left:233px;top:220px;z-index:18"><div class="in"><svg class="a" style="left:5px;top:7px;" width="18" height="16" viewBox="0 0 18 16"><rect x="1.5" y="1.5" width="16" height="13" fill="#f2f2f2" stroke="#a9a9a9"/><rect x="2" y="2" width="15" height="1" fill="#dcdcdc"/><rect x="3" y="3.5" width="6.5" height="10" fill="url(#eg)"/><rect x="14" y="3.5" width="1.2" height="6.5" fill="#4aa0a0"/><path d="M10.5 5 H12.5 M10.5 7.5 H12.5 M10.5 10 H12.5 M10.5 12.5 H12.5" stroke="#c8c8c8" stroke-width="0.8"/></svg><div class="a" style="left:28px;top:8px;width:1px;height:15px;background:#888"></div><svg class="a" style="left:42px;top:8px;" width="13" height="17" viewBox="0 0 13 17"><path d="M1.5 1.5 H9 L11.5 4 V15.5 H1.5 Z" fill="#e6eefa" stroke="#b8cbe8"/><path d="M3.5 9.5 L5.8 12 L10 7" fill="none" stroke="#8eaad6" stroke-width="1.1"/></svg><svg class="a" style="left:65px;top:8px;" width="12" height="17" viewBox="0 0 12 17"><path d="M1.5 1.5 H10.5 V6 H11 V12.5 H1.5 Z" fill="#d6e2f2"/><path d="M1.5 1.5 H5 V14.5 L1.5 12.5 Z" fill="#c9d8ee"/></svg><svg class="a" style="left:88px;top:12px;" width="8" height="8" viewBox="0 0 8 8"><rect x="0.5" y="0.5" width="7" height="1.4" fill="#9a9a9a"/><path d="M0.8 3.5 H7.2 L4 6.8 Z" fill="#1a1a1a"/></svg><div class="a" style="left:106px;top:8px;width:1px;height:15px;background:#888"></div><span class="t" style="left:113.0px;top:7.5px;font-size:12px;line-height:15px;color:#707070;transform-origin:0 50%;transform:scaleX(0.745);">エクスプローラー</span><div class="a" style="left:804px;top:14px;width:10px;height:1px;background:#8a8a8a"></div><div class="a" style="left:852px;top:9px;width:11px;height:11px;border:1px solid #8a8a8a;box-sizing:border-box"></div><svg class="a" style="left:901px;top:8px;" width="12" height="12" viewBox="0 0 12 12"><path d="M1 1 L11 11 M11 1 L1 11" stroke="#8a8a8a" stroke-width="1.05"/></svg><div class="a" style="left:0px;top:30px;width:61px;height:25px;background:#19669f"></div><span class="t" style="left:13.0px;top:36.0px;font-size:12px;line-height:15px;color:#fff;transform-origin:0 50%;transform:scaleX(0.744);">ファイル</span><span class="t" style="left:9.6px;top:104.2px;font-size:12px;line-height:15px;color:#3a3a3a;transform-origin:0 50%;transform:scaleX(0.805);">クイック アクセス</span><span class="t" style="left:13.0px;top:121.5px;font-size:12px;line-height:15px;color:#3a3a3a;transform-origin:0 50%;transform:scaleX(0.869);">にピン留めする</span><svg class="a" style="left:38px;top:71px;" width="24" height="24" viewBox="0 0 24 24"><path d="M14 1.5 L22.5 10 L19 11 L14.5 15.5 L14 20 L4 10 L8.5 9.5 L13 5 Z" fill="#8e959c"/><path d="M9 15 L2 22" stroke="#8e959c" stroke-width="2.2"/></svg><svg class="a" style="left:15px;top:179px;" width="14" height="13" viewBox="0 0 14 13"><path d="M1.5 6.5 H13 M7 1 L1.5 6.5 L7 12" fill="none" stroke="#cfcfcf" stroke-width="1.4"/></svg><svg class="a" style="left:46px;top:179px;" width="14" height="13" viewBox="0 0 14 13"><path d="M12.5 6.5 H1 M7 1 L12.5 6.5 L7 12" fill="none" stroke="#cfcfcf" stroke-width="1.4"/></svg></div><div class="bd"></div></div><div class="win" style="left:259px;top:246px;z-index:19"><div class="in"><svg class="a" style="left:5px;top:7px;" width="18" height="16" viewBox="0 0 18 16"><rect x="1.5" y="1.5" width="16" height="13" fill="#f2f2f2" stroke="#a9a9a9"/><rect x="2" y="2" width="15" height="1" fill="#dcdcdc"/><rect x="3" y="3.5" width="6.5" height="10" fill="url(#eg)"/><rect x="14" y="3.5" width="1.2" height="6.5" fill="#4aa0a0"/><path d="M10.5 5 H12.5 M10.5 7.5 H12.5 M10.5 10 H12.5 M10.5 12.5 H12.5" stroke="#c8c8c8" stroke-width="0.8"/></svg><div class="a" style="left:28px;top:8px;width:1px;height:15px;background:#888"></div><svg class="a" style="left:42px;top:8px;" width="13" height="17" viewBox="0 0 13 17"><path d="M1.5 1.5 H9 L11.5 4 V15.5 H1.5 Z" fill="#e6eefa" stroke="#b8cbe8"/><path d="M3.5 9.5 L5.8 12 L10 7" fill="none" stroke="#8eaad6" stroke-width="1.1"/></svg><svg class="a" style="left:65px;top:8px;" width="12" height="17" viewBox="0 0 12 17"><path d="M1.5 1.5 H10.5 V6 H11 V12.5 H1.5 Z" fill="#d6e2f2"/><path d="M1.5 1.5 H5 V14.5 L1.5 12.5 Z" fill="#c9d8ee"/></svg><svg class="a" style="left:88px;top:12px;" width="8" height="8" viewBox="0 0 8 8"><rect x="0.5" y="0.5" width="7" height="1.4" fill="#9a9a9a"/><path d="M0.8 3.5 H7.2 L4 6.8 Z" fill="#1a1a1a"/></svg><div class="a" style="left:106px;top:8px;width:1px;height:15px;background:#888"></div><span class="t" style="left:113.0px;top:7.5px;font-size:12px;line-height:15px;color:#707070;transform-origin:0 50%;transform:scaleX(0.745);">エクスプローラー</span><div class="a" style="left:804px;top:14px;width:10px;height:1px;background:#8a8a8a"></div><div class="a" style="left:852px;top:9px;width:11px;height:11px;border:1px solid #8a8a8a;box-sizing:border-box"></div><svg class="a" style="left:901px;top:8px;" width="12" height="12" viewBox="0 0 12 12"><path d="M1 1 L11 11 M11 1 L1 11" stroke="#8a8a8a" stroke-width="1.05"/></svg><span class="t" style="left:9.6px;top:104.2px;font-size:12px;line-height:15px;color:#3a3a3a;transform-origin:0 50%;transform:scaleX(0.805);">クイック アクセス</span><span class="t" style="left:13.0px;top:121.5px;font-size:12px;line-height:15px;color:#3a3a3a;transform-origin:0 50%;transform:scaleX(0.869);">にピン留めする</span><svg class="a" style="left:38px;top:71px;" width="24" height="24" viewBox="0 0 24 24"><path d="M14 1.5 L22.5 10 L19 11 L14.5 15.5 L14 20 L4 10 L8.5 9.5 L13 5 Z" fill="#8e959c"/><path d="M9 15 L2 22" stroke="#8e959c" stroke-width="2.2"/></svg><svg class="a" style="left:15px;top:179px;" width="14" height="13" viewBox="0 0 14 13"><path d="M1.5 6.5 H13 M7 1 L1.5 6.5 L7 12" fill="none" stroke="#cfcfcf" stroke-width="1.4"/></svg><svg class="a" style="left:46px;top:179px;" width="14" height="13" viewBox="0 0 14 13"><path d="M12.5 6.5 H1 M7 1 L12.5 6.5 L7 12" fill="none" stroke="#cfcfcf" stroke-width="1.4"/></svg></div><div class="bd"></div></div><div class="win" style="left:285px;top:272px;z-index:20"><div class="in"><svg class="a" style="left:5px;top:7px;" width="18" height="16" viewBox="0 0 18 16"><rect x="1.5" y="1.5" width="16" height="13" fill="#f2f2f2" stroke="#a9a9a9"/><rect x="2" y="2" width="15" height="1" fill="#dcdcdc"/><rect x="3" y="3.5" width="6.5" height="10" fill="url(#eg)"/><rect x="14" y="3.5" width="1.2" height="6.5" fill="#4aa0a0"/><path d="M10.5 5 H12.5 M10.5 7.5 H12.5 M10.5 10 H12.5 M10.5 12.5 H12.5" stroke="#c8c8c8" stroke-width="0.8"/></svg><div class="a" style="left:28px;top:8px;width:1px;height:15px;background:#888"></div><svg class="a" style="left:42px;top:8px;" width="13" height="17" viewBox="0 0 13 17"><path d="M1.5 1.5 H9 L11.5 4 V15.5 H1.5 Z" fill="#e6eefa" stroke="#b8cbe8"/><path d="M3.5 9.5 L5.8 12 L10 7" fill="none" stroke="#8eaad6" stroke-width="1.1"/></svg><svg class="a" style="left:65px;top:8px;" width="12" height="17" viewBox="0 0 12 17"><path d="M1.5 1.5 H10.5 V6 H11 V12.5 H1.5 Z" fill="#d6e2f2"/><path d="M1.5 1.5 H5 V14.5 L1.5 12.5 Z" fill="#c9d8ee"/></svg><svg class="a" style="left:88px;top:12px;" width="8" height="8" viewBox="0 0 8 8"><rect x="0.5" y="0.5" width="7" height="1.4" fill="#9a9a9a"/><path d="M0.8 3.5 H7.2 L4 6.8 Z" fill="#1a1a1a"/></svg><div class="a" style="left:106px;top:8px;width:1px;height:15px;background:#888"></div><span class="t" style="left:113.0px;top:7.5px;font-size:12px;line-height:15px;color:#707070;transform-origin:0 50%;transform:scaleX(0.745);">エクスプローラー</span><div class="a" style="left:804px;top:14px;width:10px;height:1px;background:#8a8a8a"></div><div class="a" style="left:852px;top:9px;width:11px;height:11px;border:1px solid #8a8a8a;box-sizing:border-box"></div><svg class="a" style="left:901px;top:8px;" width="12" height="12" viewBox="0 0 12 12"><path d="M1 1 L11 11 M11 1 L1 11" stroke="#8a8a8a" stroke-width="1.05"/></svg><div class="a" style="left:0px;top:30px;width:61px;height:25px;background:#19669f"></div><span class="t" style="left:13.0px;top:36.0px;font-size:12px;line-height:15px;color:#fff;transform-origin:0 50%;transform:scaleX(0.744);">ファイル</span><div class="a" style="left:0px;top:57px;width:932px;height:109px;background:#f3f4f5;border-top:1px solid #e4e5e6;border-bottom:1px solid #e1e1e1;box-sizing:border-box"></div><span class="t" style="left:9.6px;top:104.2px;font-size:12px;line-height:15px;color:#3a3a3a;transform-origin:0 50%;transform:scaleX(0.805);">クイック アクセス</span><span class="t" style="left:13.0px;top:121.5px;font-size:12px;line-height:15px;color:#3a3a3a;transform-origin:0 50%;transform:scaleX(0.869);">にピン留めする</span><svg class="a" style="left:38px;top:71px;" width="24" height="24" viewBox="0 0 24 24"><path d="M14 1.5 L22.5 10 L19 11 L14.5 15.5 L14 20 L4 10 L8.5 9.5 L13 5 Z" fill="#8e959c"/><path d="M9 15 L2 22" stroke="#8e959c" stroke-width="2.2"/></svg><svg class="a" style="left:15px;top:179px;" width="14" height="13" viewBox="0 0 14 13"><path d="M1.5 6.5 H13 M7 1 L1.5 6.5 L7 12" fill="none" stroke="#cfcfcf" stroke-width="1.4"/></svg><svg class="a" style="left:46px;top:179px;" width="14" height="13" viewBox="0 0 14 13"><path d="M12.5 6.5 H1 M7 1 L12.5 6.5 L7 12" fill="none" stroke="#cfcfcf" stroke-width="1.4"/></svg></div><div class="bd"></div></div><div class="win" style="left:311px;top:298px;z-index:21"><div class="in"><svg class="a" style="left:5px;top:7px;" width="18" height="16" viewBox="0 0 18 16"><rect x="1.5" y="1.5" width="16" height="13" fill="#f2f2f2" stroke="#a9a9a9"/><rect x="2" y="2" width="15" height="1" fill="#dcdcdc"/><rect x="3" y="3.5" width="6.5" height="10" fill="url(#eg)"/><rect x="14" y="3.5" width="1.2" height="6.5" fill="#4aa0a0"/><path d="M10.5 5 H12.5 M10.5 7.5 H12.5 M10.5 10 H12.5 M10.5 12.5 H12.5" stroke="#c8c8c8" stroke-width="0.8"/></svg><div class="a" style="left:28px;top:8px;width:1px;height:15px;background:#888"></div><svg class="a" style="left:42px;top:8px;" width="13" height="17" viewBox="0 0 13 17"><path d="M1.5 1.5 H9 L11.5 4 V15.5 H1.5 Z" fill="#e6eefa" stroke="#b8cbe8"/><path d="M3.5 9.5 L5.8 12 L10 7" fill="none" stroke="#8eaad6" stroke-width="1.1"/></svg><svg class="a" style="left:65px;top:8px;" width="12" height="17" viewBox="0 0 12 17"><path d="M1.5 1.5 H10.5 V6 H11 V12.5 H1.5 Z" fill="#d6e2f2"/><path d="M1.5 1.5 H5 V14.5 L1.5 12.5 Z" fill="#c9d8ee"/></svg><svg class="a" style="left:88px;top:12px;" width="8" height="8" viewBox="0 0 8 8"><rect x="0.5" y="0.5" width="7" height="1.4" fill="#9a9a9a"/><path d="M0.8 3.5 H7.2 L4 6.8 Z" fill="#1a1a1a"/></svg><div class="a" style="left:106px;top:8px;width:1px;height:15px;background:#888"></div><span class="t" style="left:113.0px;top:7.5px;font-size:12px;line-height:15px;color:#707070;transform-origin:0 50%;transform:scaleX(0.745);">エクスプローラー</span><div class="a" style="left:804px;top:14px;width:10px;height:1px;background:#8a8a8a"></div><div class="a" style="left:852px;top:9px;width:11px;height:11px;border:1px solid #8a8a8a;box-sizing:border-box"></div><svg class="a" style="left:901px;top:8px;" width="12" height="12" viewBox="0 0 12 12"><path d="M1 1 L11 11 M11 1 L1 11" stroke="#8a8a8a" stroke-width="1.05"/></svg><div class="a" style="left:0px;top:30px;width:61px;height:25px;background:#19669f"></div><span class="t" style="left:13.0px;top:36.0px;font-size:12px;line-height:15px;color:#fff;transform-origin:0 50%;transform:scaleX(0.744);">ファイル</span><div class="a" style="left:0px;top:57px;width:932px;height:109px;background:#f3f4f5;border-top:1px solid #e4e5e6;border-bottom:1px solid #e1e1e1;box-sizing:border-box"></div><span class="t" style="left:9.6px;top:104.2px;font-size:12px;line-height:15px;color:#3a3a3a;transform-origin:0 50%;transform:scaleX(0.805);">クイック アクセス</span><span class="t" style="left:13.0px;top:121.5px;font-size:12px;line-height:15px;color:#3a3a3a;transform-origin:0 50%;transform:scaleX(0.869);">にピン留めする</span><svg class="a" style="left:38px;top:71px;" width="24" height="24" viewBox="0 0 24 24"><path d="M14 1.5 L22.5 10 L19 11 L14.5 15.5 L14 20 L4 10 L8.5 9.5 L13 5 Z" fill="#8e959c"/><path d="M9 15 L2 22" stroke="#8e959c" stroke-width="2.2"/></svg><svg class="a" style="left:15px;top:179px;" width="14" height="13" viewBox="0 0 14 13"><path d="M1.5 6.5 H13 M7 1 L1.5 6.5 L7 12" fill="none" stroke="#cfcfcf" stroke-width="1.4"/></svg><svg class="a" style="left:46px;top:179px;" width="14" height="13" viewBox="0 0 14 13"><path d="M12.5 6.5 H1 M7 1 L12.5 6.5 L7 12" fill="none" stroke="#cfcfcf" stroke-width="1.4"/></svg></div><div class="bd"></div></div><div class="win" style="left:337px;top:324px;z-index:22"><div class="in"><svg class="a" style="left:5px;top:7px;" width="18" height="16" viewBox="0 0 18 16"><rect x="1.5" y="1.5" width="16" height="13" fill="#f2f2f2" stroke="#a9a9a9"/><rect x="2" y="2" width="15" height="1" fill="#dcdcdc"/><rect x="3" y="3.5" width="6.5" height="10" fill="url(#eg)"/><rect x="14" y="3.5" width="1.2" height="6.5" fill="#4aa0a0"/><path d="M10.5 5 H12.5 M10.5 7.5 H12.5 M10.5 10 H12.5 M10.5 12.5 H12.5" stroke="#c8c8c8" stroke-width="0.8"/></svg><div class="a" style="left:28px;top:8px;width:1px;height:15px;background:#888"></div><svg class="a" style="left:42px;top:8px;" width="13" height="17" viewBox="0 0 13 17"><path d="M1.5 1.5 H9 L11.5 4 V15.5 H1.5 Z" fill="#e6eefa" stroke="#b8cbe8"/><path d="M3.5 9.5 L5.8 12 L10 7" fill="none" stroke="#8eaad6" stroke-width="1.1"/></svg><svg class="a" style="left:65px;top:8px;" width="12" height="17" viewBox="0 0 12 17"><path d="M1.5 1.5 H10.5 V6 H11 V12.5 H1.5 Z" fill="#d6e2f2"/><path d="M1.5 1.5 H5 V14.5 L1.5 12.5 Z" fill="#c9d8ee"/></svg><svg class="a" style="left:88px;top:12px;" width="8" height="8" viewBox="0 0 8 8"><rect x="0.5" y="0.5" width="7" height="1.4" fill="#9a9a9a"/><path d="M0.8 3.5 H7.2 L4 6.8 Z" fill="#1a1a1a"/></svg><div class="a" style="left:106px;top:8px;width:1px;height:15px;background:#888"></div><span class="t" style="left:113.0px;top:7.5px;font-size:12px;line-height:15px;color:#707070;transform-origin:0 50%;transform:scaleX(0.745);">エクスプローラー</span><div class="a" style="left:804px;top:14px;width:10px;height:1px;background:#8a8a8a"></div><div class="a" style="left:852px;top:9px;width:11px;height:11px;border:1px solid #8a8a8a;box-sizing:border-box"></div><svg class="a" style="left:901px;top:8px;" width="12" height="12" viewBox="0 0 12 12"><path d="M1 1 L11 11 M11 1 L1 11" stroke="#8a8a8a" stroke-width="1.05"/></svg><div class="a" style="left:0px;top:30px;width:61px;height:25px;background:#19669f"></div><span class="t" style="left:13.0px;top:36.0px;font-size:12px;line-height:15px;color:#fff;transform-origin:0 50%;transform:scaleX(0.744);">ファイル</span><span class="t" style="left:9.6px;top:104.2px;font-size:12px;line-height:15px;color:#3a3a3a;transform-origin:0 50%;transform:scaleX(0.805);">クイック アクセス</span><span class="t" style="left:13.0px;top:121.5px;font-size:12px;line-height:15px;color:#3a3a3a;transform-origin:0 50%;transform:scaleX(0.869);">にピン留めする</span><svg class="a" style="left:38px;top:71px;" width="24" height="24" viewBox="0 0 24 24"><path d="M14 1.5 L22.5 10 L19 11 L14.5 15.5 L14 20 L4 10 L8.5 9.5 L13 5 Z" fill="#8e959c"/><path d="M9 15 L2 22" stroke="#8e959c" stroke-width="2.2"/></svg><svg class="a" style="left:15px;top:179px;" width="14" height="13" viewBox="0 0 14 13"><path d="M1.5 6.5 H13 M7 1 L1.5 6.5 L7 12" fill="none" stroke="#cfcfcf" stroke-width="1.4"/></svg><svg class="a" style="left:46px;top:179px;" width="14" height="13" viewBox="0 0 14 13"><path d="M12.5 6.5 H1 M7 1 L12.5 6.5 L7 12" fill="none" stroke="#cfcfcf" stroke-width="1.4"/></svg></div><div class="bd"></div></div><div class="win" style="left:364px;top:351px;z-index:23"><div class="in"><svg class="a" style="left:5px;top:7px;" width="18" height="16" viewBox="0 0 18 16"><rect x="1.5" y="1.5" width="16" height="13" fill="#f2f2f2" stroke="#a9a9a9"/><rect x="2" y="2" width="15" height="1" fill="#dcdcdc"/><rect x="3" y="3.5" width="6.5" height="10" fill="url(#eg)"/><rect x="14" y="3.5" width="1.2" height="6.5" fill="#4aa0a0"/><path d="M10.5 5 H12.5 M10.5 7.5 H12.5 M10.5 10 H12.5 M10.5 12.5 H12.5" stroke="#c8c8c8" stroke-width="0.8"/></svg><div class="a" style="left:28px;top:8px;width:1px;height:15px;background:#888"></div><svg class="a" style="left:42px;top:8px;" width="13" height="17" viewBox="0 0 13 17"><path d="M1.5 1.5 H9 L11.5 4 V15.5 H1.5 Z" fill="#e6eefa" stroke="#b8cbe8"/><path d="M3.5 9.5 L5.8 12 L10 7" fill="none" stroke="#8eaad6" stroke-width="1.1"/></svg><svg class="a" style="left:65px;top:8px;" width="12" height="17" viewBox="0 0 12 17"><path d="M1.5 1.5 H10.5 V6 H11 V12.5 H1.5 Z" fill="#d6e2f2"/><path d="M1.5 1.5 H5 V14.5 L1.5 12.5 Z" fill="#c9d8ee"/></svg><svg class="a" style="left:88px;top:12px;" width="8" height="8" viewBox="0 0 8 8"><rect x="0.5" y="0.5" width="7" height="1.4" fill="#9a9a9a"/><path d="M0.8 3.5 H7.2 L4 6.8 Z" fill="#1a1a1a"/></svg><div class="a" style="left:106px;top:8px;width:1px;height:15px;background:#888"></div><span class="t" style="left:113.0px;top:7.5px;font-size:12px;line-height:15px;color:#707070;transform-origin:0 50%;transform:scaleX(0.745);">エクスプローラー</span><div class="a" style="left:804px;top:14px;width:10px;height:1px;background:#8a8a8a"></div><div class="a" style="left:852px;top:9px;width:11px;height:11px;border:1px solid #8a8a8a;box-sizing:border-box"></div><svg class="a" style="left:901px;top:8px;" width="12" height="12" viewBox="0 0 12 12"><path d="M1 1 L11 11 M11 1 L1 11" stroke="#8a8a8a" stroke-width="1.05"/></svg><span class="t" style="left:9.6px;top:104.2px;font-size:12px;line-height:15px;color:#3a3a3a;transform-origin:0 50%;transform:scaleX(0.805);">クイック アクセス</span><span class="t" style="left:13.0px;top:121.5px;font-size:12px;line-height:15px;color:#3a3a3a;transform-origin:0 50%;transform:scaleX(0.869);">にピン留めする</span><svg class="a" style="left:38px;top:71px;" width="24" height="24" viewBox="0 0 24 24"><path d="M14 1.5 L22.5 10 L19 11 L14.5 15.5 L14 20 L4 10 L8.5 9.5 L13 5 Z" fill="#8e959c"/><path d="M9 15 L2 22" stroke="#8e959c" stroke-width="2.2"/></svg><svg class="a" style="left:15px;top:179px;" width="14" height="13" viewBox="0 0 14 13"><path d="M1.5 6.5 H13 M7 1 L1.5 6.5 L7 12" fill="none" stroke="#cfcfcf" stroke-width="1.4"/></svg><svg class="a" style="left:46px;top:179px;" width="14" height="13" viewBox="0 0 14 13"><path d="M12.5 6.5 H1 M7 1 L12.5 6.5 L7 12" fill="none" stroke="#cfcfcf" stroke-width="1.4"/></svg></div><div class="bd"></div></div><div class="win" style="left:416px;top:403px;z-index:24"><div class="in"><svg class="a" style="left:5px;top:7px;" width="18" height="16" viewBox="0 0 18 16"><rect x="1.5" y="1.5" width="16" height="13" fill="#f2f2f2" stroke="#a9a9a9"/><rect x="2" y="2" width="15" height="1" fill="#dcdcdc"/><rect x="3" y="3.5" width="6.5" height="10" fill="url(#eg)"/><rect x="14" y="3.5" width="1.2" height="6.5" fill="#4aa0a0"/><path d="M10.5 5 H12.5 M10.5 7.5 H12.5 M10.5 10 H12.5 M10.5 12.5 H12.5" stroke="#c8c8c8" stroke-width="0.8"/></svg><div class="a" style="left:28px;top:8px;width:1px;height:15px;background:#888"></div><svg class="a" style="left:42px;top:8px;" width="13" height="17" viewBox="0 0 13 17"><path d="M1.5 1.5 H9 L11.5 4 V15.5 H1.5 Z" fill="#e6eefa" stroke="#b8cbe8"/><path d="M3.5 9.5 L5.8 12 L10 7" fill="none" stroke="#8eaad6" stroke-width="1.1"/></svg><svg class="a" style="left:65px;top:8px;" width="12" height="17" viewBox="0 0 12 17"><path d="M1.5 1.5 H10.5 V6 H11 V12.5 H1.5 Z" fill="#d6e2f2"/><path d="M1.5 1.5 H5 V14.5 L1.5 12.5 Z" fill="#c9d8ee"/></svg><svg class="a" style="left:88px;top:12px;" width="8" height="8" viewBox="0 0 8 8"><rect x="0.5" y="0.5" width="7" height="1.4" fill="#9a9a9a"/><path d="M0.8 3.5 H7.2 L4 6.8 Z" fill="#1a1a1a"/></svg><div class="a" style="left:106px;top:8px;width:1px;height:15px;background:#888"></div><span class="t" style="left:113.0px;top:7.5px;font-size:12px;line-height:15px;color:#707070;transform-origin:0 50%;transform:scaleX(0.745);">エクスプローラー</span><div class="a" style="left:804px;top:14px;width:10px;height:1px;background:#8a8a8a"></div><div class="a" style="left:852px;top:9px;width:11px;height:11px;border:1px solid #8a8a8a;box-sizing:border-box"></div><svg class="a" style="left:901px;top:8px;" width="12" height="12" viewBox="0 0 12 12"><path d="M1 1 L11 11 M11 1 L1 11" stroke="#8a8a8a" stroke-width="1.05"/></svg><div class="a" style="left:0px;top:30px;width:61px;height:25px;background:#19669f"></div><span class="t" style="left:13.0px;top:36.0px;font-size:12px;line-height:15px;color:#fff;transform-origin:0 50%;transform:scaleX(0.744);">ファイル</span><span class="t" style="left:9.6px;top:104.2px;font-size:12px;line-height:15px;color:#3a3a3a;transform-origin:0 50%;transform:scaleX(0.805);">クイック アクセス</span><span class="t" style="left:13.0px;top:121.5px;font-size:12px;line-height:15px;color:#3a3a3a;transform-origin:0 50%;transform:scaleX(0.869);">にピン留めする</span><svg class="a" style="left:38px;top:71px;" width="24" height="24" viewBox="0 0 24 24"><path d="M14 1.5 L22.5 10 L19 11 L14.5 15.5 L14 20 L4 10 L8.5 9.5 L13 5 Z" fill="#8e959c"/><path d="M9 15 L2 22" stroke="#8e959c" stroke-width="2.2"/></svg><svg class="a" style="left:15px;top:179px;" width="14" height="13" viewBox="0 0 14 13"><path d="M1.5 6.5 H13 M7 1 L1.5 6.5 L7 12" fill="none" stroke="#cfcfcf" stroke-width="1.4"/></svg><svg class="a" style="left:46px;top:179px;" width="14" height="13" viewBox="0 0 14 13"><path d="M12.5 6.5 H1 M7 1 L12.5 6.5 L7 12" fill="none" stroke="#cfcfcf" stroke-width="1.4"/></svg></div><div class="bd"></div></div><div class="win" style="left:390px;top:377px;z-index:25"><div class="in"><svg class="a" style="left:5px;top:7px;" width="18" height="16" viewBox="0 0 18 16"><rect x="1.5" y="1.5" width="16" height="13" fill="#f2f2f2" stroke="#a9a9a9"/><rect x="2" y="2" width="15" height="1" fill="#dcdcdc"/><rect x="3" y="3.5" width="6.5" height="10" fill="url(#eg)"/><rect x="14" y="3.5" width="1.2" height="6.5" fill="#4aa0a0"/><path d="M10.5 5 H12.5 M10.5 7.5 H12.5 M10.5 10 H12.5 M10.5 12.5 H12.5" stroke="#c8c8c8" stroke-width="0.8"/></svg><div class="a" style="left:28px;top:8px;width:1px;height:15px;background:#888"></div><svg class="a" style="left:42px;top:8px;" width="13" height="17" viewBox="0 0 13 17"><path d="M1.5 1.5 H9 L11.5 4 V15.5 H1.5 Z" fill="#e6eefa" stroke="#b8cbe8"/><path d="M3.5 9.5 L5.8 12 L10 7" fill="none" stroke="#8eaad6" stroke-width="1.1"/></svg><svg class="a" style="left:65px;top:8px;" width="12" height="17" viewBox="0 0 12 17"><path d="M1.5 1.5 H10.5 V6 H11 V12.5 H1.5 Z" fill="#d6e2f2"/><path d="M1.5 1.5 H5 V14.5 L1.5 12.5 Z" fill="#c9d8ee"/></svg><svg class="a" style="left:88px;top:12px;" width="8" height="8" viewBox="0 0 8 8"><rect x="0.5" y="0.5" width="7" height="1.4" fill="#9a9a9a"/><path d="M0.8 3.5 H7.2 L4 6.8 Z" fill="#1a1a1a"/></svg><div class="a" style="left:106px;top:8px;width:1px;height:15px;background:#888"></div><span class="t" style="left:113.0px;top:7.5px;font-size:12px;line-height:15px;color:#707070;transform-origin:0 50%;transform:scaleX(0.745);">エクスプローラー</span><div class="a" style="left:804px;top:14px;width:10px;height:1px;background:#8a8a8a"></div><div class="a" style="left:852px;top:9px;width:11px;height:11px;border:1px solid #8a8a8a;box-sizing:border-box"></div><svg class="a" style="left:901px;top:8px;" width="12" height="12" viewBox="0 0 12 12"><path d="M1 1 L11 11 M11 1 L1 11" stroke="#8a8a8a" stroke-width="1.05"/></svg><div class="a" style="left:0px;top:30px;width:61px;height:25px;background:#19669f"></div><span class="t" style="left:13.0px;top:36.0px;font-size:12px;line-height:15px;color:#fff;transform-origin:0 50%;transform:scaleX(0.744);">ファイル</span><div class="a" style="left:0px;top:57px;width:932px;height:109px;background:#f3f4f5;border-top:1px solid #e4e5e6;border-bottom:1px solid #e1e1e1;box-sizing:border-box"></div><div class="a" style="left:61px;top:30px;width:57px;height:28px;background:#f3f4f5;border:1px solid #e2e3e4;border-bottom:none;box-sizing:border-box"></div><span class="t" style="left:75.4px;top:36.2px;font-size:12px;line-height:15px;color:#383838;transform-origin:0 50%;transform:scaleX(0.778);">ホーム</span><span class="t" style="left:134.0px;top:36.2px;font-size:12px;line-height:15px;color:#383838;transform-origin:0 50%;transform:scaleX(1.017);">共有</span><span class="t" style="left:189.3px;top:36.2px;font-size:12px;line-height:15px;color:#383838;transform-origin:0 50%;transform:scaleX(1.042);">表示</span><svg class="a" style="left:890px;top:40px;" width="14" height="8" viewBox="0 0 14 8"><path d="M1 7 L7 1 L13 7" fill="none" stroke="#7a7a7a" stroke-width="1"/></svg><svg class="a" style="left:912px;top:35.5px;" width="16" height="16" viewBox="0 0 16 16"><circle cx="8" cy="8" r="7.6" fill="#0b6fd8"/><text x="8" y="12.3" text-anchor="middle" font-size="11.5" font-weight="700" fill="#fff" font-family="Liberation Sans">?</text></svg><span class="t" style="left:9.6px;top:104.2px;font-size:12px;line-height:15px;color:#3a3a3a;transform-origin:0 50%;transform:scaleX(0.805);">クイック アクセス</span><span class="t" style="left:13.0px;top:121.5px;font-size:12px;line-height:15px;color:#3a3a3a;transform-origin:0 50%;transform:scaleX(0.869);">にピン留めする</span><svg class="a" style="left:38px;top:71px;" width="24" height="24" viewBox="0 0 24 24"><path d="M14 1.5 L22.5 10 L19 11 L14.5 15.5 L14 20 L4 10 L8.5 9.5 L13 5 Z" fill="#8e959c"/><path d="M9 15 L2 22" stroke="#8e959c" stroke-width="2.2"/></svg><svg class="a" style="left:15px;top:179px;" width="14" height="13" viewBox="0 0 14 13"><path d="M1.5 6.5 H13 M7 1 L1.5 6.5 L7 12" fill="none" stroke="#cfcfcf" stroke-width="1.4"/></svg><svg class="a" style="left:46px;top:179px;" width="14" height="13" viewBox="0 0 14 13"><path d="M12.5 6.5 H1 M7 1 L12.5 6.5 L7 12" fill="none" stroke="#cfcfcf" stroke-width="1.4"/></svg></div><div class="bd"></div></div><div class="win" style="left:442px;top:429px;z-index:26"><div class="in"><svg class="a" style="left:5px;top:7px;" width="18" height="16" viewBox="0 0 18 16"><rect x="1.5" y="1.5" width="16" height="13" fill="#f2f2f2" stroke="#a9a9a9"/><rect x="2" y="2" width="15" height="1" fill="#dcdcdc"/><rect x="3" y="3.5" width="6.5" height="10" fill="url(#eg)"/><rect x="14" y="3.5" width="1.2" height="6.5" fill="#4aa0a0"/><path d="M10.5 5 H12.5 M10.5 7.5 H12.5 M10.5 10 H12.5 M10.5 12.5 H12.5" stroke="#c8c8c8" stroke-width="0.8"/></svg><div class="a" style="left:28px;top:8px;width:1px;height:15px;background:#888"></div><svg class="a" style="left:42px;top:8px;" width="13" height="17" viewBox="0 0 13 17"><path d="M1.5 1.5 H9 L11.5 4 V15.5 H1.5 Z" fill="#e6eefa" stroke="#b8cbe8"/><path d="M3.5 9.5 L5.8 12 L10 7" fill="none" stroke="#8eaad6" stroke-width="1.1"/></svg><svg class="a" style="left:65px;top:8px;" width="12" height="17" viewBox="0 0 12 17"><path d="M1.5 1.5 H10.5 V6 H11 V12.5 H1.5 Z" fill="#d6e2f2"/><path d="M1.5 1.5 H5 V14.5 L1.5 12.5 Z" fill="#c9d8ee"/></svg><svg class="a" style="left:88px;top:12px;" width="8" height="8" viewBox="0 0 8 8"><rect x="0.5" y="0.5" width="7" height="1.4" fill="#9a9a9a"/><path d="M0.8 3.5 H7.2 L4 6.8 Z" fill="#1a1a1a"/></svg><div class="a" style="left:106px;top:8px;width:1px;height:15px;background:#888"></div><span class="t" style="left:113.0px;top:7.5px;font-size:12px;line-height:15px;color:#707070;transform-origin:0 50%;transform:scaleX(0.745);">エクスプローラー</span><div class="a" style="left:804px;top:14px;width:10px;height:1px;background:#8a8a8a"></div><div class="a" style="left:852px;top:9px;width:11px;height:11px;border:1px solid #8a8a8a;box-sizing:border-box"></div><svg class="a" style="left:901px;top:8px;" width="12" height="12" viewBox="0 0 12 12"><path d="M1 1 L11 11 M11 1 L1 11" stroke="#8a8a8a" stroke-width="1.05"/></svg><div class="a" style="left:0px;top:30px;width:61px;height:25px;background:#19669f"></div><span class="t" style="left:13.0px;top:36.0px;font-size:12px;line-height:15px;color:#fff;transform-origin:0 50%;transform:scaleX(0.744);">ファイル</span><div class="a" style="left:0px;top:57px;width:932px;height:109px;background:#f3f4f5;border-top:1px solid #e4e5e6;border-bottom:1px solid #e1e1e1;box-sizing:border-box"></div><span class="t" style="left:9.6px;top:104.2px;font-size:12px;line-height:15px;color:#3a3a3a;transform-origin:0 50%;transform:scaleX(0.805);">クイック アクセス</span><span class="t" style="left:13.0px;top:121.5px;font-size:12px;line-height:15px;color:#3a3a3a;transform-origin:0 50%;transform:scaleX(0.869);">にピン留めする</span><svg class="a" style="left:38px;top:71px;" width="24" height="24" viewBox="0 0 24 24"><path d="M14 1.5 L22.5 10 L19 11 L14.5 15.5 L14 20 L4 10 L8.5 9.5 L13 5 Z" fill="#8e959c"/><path d="M9 15 L2 22" stroke="#8e959c" stroke-width="2.2"/></svg><svg class="a" style="left:15px;top:179px;" width="14" height="13" viewBox="0 0 14 13"><path d="M1.5 6.5 H13 M7 1 L1.5 6.5 L7 12" fill="none" stroke="#cfcfcf" stroke-width="1.4"/></svg><svg class="a" style="left:46px;top:179px;" width="14" height="13" viewBox="0 0 14 13"><path d="M12.5 6.5 H1 M7 1 L12.5 6.5 L7 12" fill="none" stroke="#cfcfcf" stroke-width="1.4"/></svg></div><div class="bd"></div></div><div class="win" style="left:468px;top:455px;z-index:27"><div class="in"><svg class="a" style="left:5px;top:7px;" width="18" height="16" viewBox="0 0 18 16"><rect x="1.5" y="1.5" width="16" height="13" fill="#f2f2f2" stroke="#a9a9a9"/><rect x="2" y="2" width="15" height="1" fill="#dcdcdc"/><rect x="3" y="3.5" width="6.5" height="10" fill="url(#eg)"/><rect x="14" y="3.5" width="1.2" height="6.5" fill="#4aa0a0"/><path d="M10.5 5 H12.5 M10.5 7.5 H12.5 M10.5 10 H12.5 M10.5 12.5 H12.5" stroke="#c8c8c8" stroke-width="0.8"/></svg><div class="a" style="left:28px;top:8px;width:1px;height:15px;background:#888"></div><svg class="a" style="left:42px;top:8px;" width="13" height="17" viewBox="0 0 13 17"><path d="M1.5 1.5 H9 L11.5 4 V15.5 H1.5 Z" fill="#e6eefa" stroke="#b8cbe8"/><path d="M3.5 9.5 L5.8 12 L10 7" fill="none" stroke="#8eaad6" stroke-width="1.1"/></svg><svg class="a" style="left:65px;top:8px;" width="12" height="17" viewBox="0 0 12 17"><path d="M1.5 1.5 H10.5 V6 H11 V12.5 H1.5 Z" fill="#d6e2f2"/><path d="M1.5 1.5 H5 V14.5 L1.5 12.5 Z" fill="#c9d8ee"/></svg><svg class="a" style="left:88px;top:12px;" width="8" height="8" viewBox="0 0 8 8"><rect x="0.5" y="0.5" width="7" height="1.4" fill="#9a9a9a"/><path d="M0.8 3.5 H7.2 L4 6.8 Z" fill="#1a1a1a"/></svg><div class="a" style="left:106px;top:8px;width:1px;height:15px;background:#888"></div><span class="t" style="left:113.0px;top:7.5px;font-size:12px;line-height:15px;color:#707070;transform-origin:0 50%;transform:scaleX(0.745);">エクスプローラー</span><div class="a" style="left:804px;top:14px;width:10px;height:1px;background:#8a8a8a"></div><div class="a" style="left:852px;top:9px;width:11px;height:11px;border:1px solid #8a8a8a;box-sizing:border-box"></div><svg class="a" style="left:901px;top:8px;" width="12" height="12" viewBox="0 0 12 12"><path d="M1 1 L11 11 M11 1 L1 11" stroke="#8a8a8a" stroke-width="1.05"/></svg><div class="a" style="left:0px;top:30px;width:61px;height:25px;background:#19669f"></div><span class="t" style="left:13.0px;top:36.0px;font-size:12px;line-height:15px;color:#fff;transform-origin:0 50%;transform:scaleX(0.744);">ファイル</span><div class="a" style="left:0px;top:57px;width:932px;height:109px;background:#f3f4f5;border-top:1px solid #e4e5e6;border-bottom:1px solid #e1e1e1;box-sizing:border-box"></div><div class="a" style="left:61px;top:30px;width:57px;height:28px;background:#f3f4f5;border:1px solid #e2e3e4;border-bottom:none;box-sizing:border-box"></div><span class="t" style="left:75.4px;top:36.2px;font-size:12px;line-height:15px;color:#383838;transform-origin:0 50%;transform:scaleX(0.778);">ホーム</span><span class="t" style="left:134.0px;top:36.2px;font-size:12px;line-height:15px;color:#383838;transform-origin:0 50%;transform:scaleX(1.017);">共有</span><span class="t" style="left:189.3px;top:36.2px;font-size:12px;line-height:15px;color:#383838;transform-origin:0 50%;transform:scaleX(1.042);">表示</span><svg class="a" style="left:890px;top:40px;" width="14" height="8" viewBox="0 0 14 8"><path d="M1 7 L7 1 L13 7" fill="none" stroke="#7a7a7a" stroke-width="1"/></svg><svg class="a" style="left:912px;top:35.5px;" width="16" height="16" viewBox="0 0 16 16"><circle cx="8" cy="8" r="7.6" fill="#0b6fd8"/><text x="8" y="12.3" text-anchor="middle" font-size="11.5" font-weight="700" fill="#fff" font-family="Liberation Sans">?</text></svg><span class="t" style="left:9.6px;top:104.2px;font-size:12px;line-height:15px;color:#3a3a3a;transform-origin:0 50%;transform:scaleX(0.805);">クイック アクセス</span><span class="t" style="left:13.0px;top:121.5px;font-size:12px;line-height:15px;color:#3a3a3a;transform-origin:0 50%;transform:scaleX(0.869);">にピン留めする</span><svg class="a" style="left:38px;top:71px;" width="24" height="24" viewBox="0 0 24 24"><path d="M14 1.5 L22.5 10 L19 11 L14.5 15.5 L14 20 L4 10 L8.5 9.5 L13 5 Z" fill="#8e959c"/><path d="M9 15 L2 22" stroke="#8e959c" stroke-width="2.2"/></svg><svg class="a" style="left:15px;top:179px;" width="14" height="13" viewBox="0 0 14 13"><path d="M1.5 6.5 H13 M7 1 L1.5 6.5 L7 12" fill="none" stroke="#cfcfcf" stroke-width="1.4"/></svg><svg class="a" style="left:46px;top:179px;" width="14" height="13" viewBox="0 0 14 13"><path d="M12.5 6.5 H1 M7 1 L12.5 6.5 L7 12" fill="none" stroke="#cfcfcf" stroke-width="1.4"/></svg><svg class="a" style="left:101px;top:66px;" width="28" height="32" viewBox="0 0 28 32"><path d="M1.5 1.5 H12 L16 5.5 V24.5 H1.5 Z" fill="#e4ecf8" stroke="#c5d4ea"/><path d="M10.5 7.5 H21 L25 11.5 V30.5 H10.5 Z" fill="#e4ecf8" stroke="#c5d4ea"/><path d="M13 15 H22 M13 18 H22 M13 21 H22 M13 24 H22 M13 27 H22" stroke="#c8d6ea"/></svg><span class="t" style="left:102.0px;top:104.2px;font-size:12px;line-height:15px;color:#8a8a8a;transform-origin:0 50%;transform:scaleX(0.722);">コピー</span><svg class="a" style="left:150px;top:66px;" width="24" height="32" viewBox="0 0 24 32"><rect x="2" y="5" width="20" height="26" rx="1" fill="#bccbe0" stroke="#8fa6c8"/><rect x="4.5" y="8" width="15" height="20.5" fill="#eef3fa"/><path d="M6 12 H18 M6 15 H18 M6 18 H18 M6 21 H18 M6 24 H18" stroke="#d0dcec"/><rect x="8" y="2" width="8" height="5" rx="1" fill="#c5d3e6" stroke="#9ab0cf"/></svg><span class="t" style="left:140.5px;top:104.2px;font-size:12px;line-height:15px;color:#8a8a8a;transform-origin:0 50%;transform:scaleX(0.896);">貼り付け</span><svg class="a" style="left:191px;top:66px;" width="14" height="17" viewBox="0 0 14 17"><path d="M3 1 L9 11 M11 1 L5 11" stroke="#9aaccc" stroke-width="1.2" fill="none"/><circle cx="4" cy="13" r="2.6" fill="none" stroke="#9aaccc" stroke-width="1.2"/><circle cx="10" cy="13" r="2.6" fill="none" stroke="#9aaccc" stroke-width="1.2"/></svg><span class="t" style="left:210.5px;top:67.0px;font-size:12px;line-height:15px;color:#8a8a8a;transform-origin:0 50%;transform:scaleX(0.875);">切り取り</span><svg class="a" style="left:191px;top:92px;" width="14" height="11" viewBox="0 0 14 11"><rect x="0.5" y="0.5" width="13" height="10" fill="#dce6f5"/><path d="M3 3 L5 8 M5 3 L7 8 M8 7 H12" stroke="#8aa0c4" stroke-width="0.9"/></svg><span class="t" style="left:210.5px;top:90.5px;font-size:12px;line-height:15px;color:#8a8a8a;transform-origin:0 50%;transform:scaleX(0.771);">パスのコピー</span><svg class="a" style="left:192px;top:112px;" width="13" height="18" viewBox="0 0 13 18"><rect x="1" y="3" width="11" height="14" fill="#e8eef8" stroke="#9ab0cf"/><rect x="4" y="1" width="5" height="3" fill="#c5d3e6" stroke="#9ab0cf" stroke-width="0.8"/><path d="M4.5 13 L8.5 9 M6 9 H8.5 V11.5" stroke="#6a86b0" fill="none" stroke-width="1.1"/></svg><span class="t" style="left:210.5px;top:114.2px;font-size:12px;line-height:15px;color:#8a8a8a;transform-origin:0 50%;transform:scaleX(0.802);">ショートカットの貼り付け</span><span class="t" style="left:137.8px;top:145.1px;font-size:12px;line-height:15px;color:#505050;transform-origin:0 50%;transform:scaleX(0.758);">クリップボード</span><div class="a" style="left:338px;top:61px;width:1px;height:100px;background:#e2e3e4"></div><svg class="a" style="left:352px;top:66px;" width="14" height="32" viewBox="0 0 14 32"><rect x="1" y="1" width="13" height="30" fill="#dbe5f4"/></svg><span class="t" style="left:345.0px;top:104.2px;font-size:12px;line-height:15px;color:#8a8a8a;transform-origin:0 50%;transform:scaleX(1.111);">移動先</span><div class="a" style="left:435px;top:61px;width:1px;height:76px;background:#e2e3e4"></div><span class="t" style="left:494.0px;top:123.5px;font-size:12px;line-height:15px;color:#9a9a9a;">変更</span><span class="t" style="left:543.0px;top:123.5px;font-size:12px;line-height:15px;color:#9a9a9a;transform-origin:0 50%;transform:scaleX(0.800);">フォルダー</span><span class="t" style="left:423.8px;top:146.0px;font-size:12px;line-height:15px;color:#505050;transform-origin:0 50%;transform:scaleX(1.012);">整理</span><div class="a" style="left:536px;top:61px;width:1px;height:100px;background:#e2e3e4"></div><span class="t" style="left:569.0px;top:146.0px;font-size:12px;line-height:15px;color:#505050;transform-origin:0 50%;transform:scaleX(1.029);">新規</span><div class="a" style="left:629px;top:61px;width:1px;height:100px;background:#e2e3e4"></div><span class="t" style="left:676.0px;top:146.0px;font-size:12px;line-height:15px;color:#505050;transform-origin:0 50%;transform:scaleX(1.000);">開く</span><svg class="a" style="left:643px;top:120px;" width="18" height="14" viewBox="0 0 18 14"><circle cx="9" cy="8" r="6" fill="#c9d7ec"/></svg><div class="a" style="left:749px;top:61px;width:1px;height:100px;background:#e2e3e4"></div><svg class="a" style="left:757px;top:66px;" width="15" height="15" viewBox="0 0 15 15"><rect x="0.5" y="0.5" width="14" height="14" fill="#c7d6ee" stroke="#b0c4e4"/><path d="M7.5 0 V15 M0 7.5 H15" stroke="#9fb5da"/></svg><span class="t" style="left:777.0px;top:67.0px;font-size:12px;line-height:15px;color:#8a8a8a;transform-origin:0 50%;transform:scaleX(0.923);">すべて選択</span><svg class="a" style="left:757px;top:90px;" width="15" height="14" viewBox="0 0 15 14"><rect x="0.5" y="0.5" width="6" height="6" fill="#e8eef8" stroke="#cad8ee"/><rect x="8.5" y="0.5" width="6" height="6" fill="#e8eef8" stroke="#cad8ee"/><rect x="0.5" y="7.5" width="6" height="6" fill="#e8eef8" stroke="#cad8ee"/><rect x="8.5" y="7.5" width="6" height="6" fill="#e8eef8" stroke="#cad8ee"/></svg><span class="t" style="left:777.0px;top:90.5px;font-size:12px;line-height:15px;color:#8a8a8a;transform-origin:0 50%;transform:scaleX(1.042);">選択解除</span><svg class="a" style="left:757px;top:113px;" width="15" height="15" viewBox="0 0 15 15"><rect x="0.5" y="0.5" width="6.5" height="6.5" fill="#e8eef8" stroke="#cad8ee"/><rect x="8" y="0.5" width="6.5" height="6.5" fill="#c7d6ee" stroke="#b0c4e4"/><rect x="0.5" y="8" width="6.5" height="6.5" fill="#c7d6ee" stroke="#b0c4e4"/><rect x="8" y="8" width="6.5" height="6.5" fill="#e8eef8" stroke="#cad8ee"/></svg><span class="t" style="left:777.0px;top:114.2px;font-size:12px;line-height:15px;color:#8a8a8a;transform-origin:0 50%;transform:scaleX(0.946);">選択の切り替え</span><span class="t" style="left:794.8px;top:145.9px;font-size:12px;line-height:15px;color:#505050;transform-origin:0 50%;transform:scaleX(1.021);">選択</span><div class="a" style="left:867px;top:61px;width:1px;height:100px;background:#e2e3e4"></div><svg class="a" style="left:93px;top:178px;" width="14" height="15" viewBox="0 0 14 15"><path d="M7 14 V2 M2 7 L7 2 L12 7" fill="none" stroke="#6a6a6a" stroke-width="1.3"/></svg><svg class="a" style="left:73px;top:180px;" width="10" height="8" viewBox="0 0 10 8"><path d="M1.5 2 L5 5.5 L8.5 2" fill="none" stroke="#cfcfcf" stroke-width="1.1"/></svg><div class="a" style="left:113px;top:168px;width:520px;height:34px;background:#efefef;border:1px solid #dedede;box-sizing:border-box"></div><div class="a" style="left:600px;top:169px;width:1px;height:32px;background:#dedede"></div><svg class="a" style="left:501px;top:177px;" width="24" height="24" viewBox="0 0 24 24"><circle cx="12" cy="12" r="8.7" fill="none" stroke="#1f8ff5" stroke-width="4"/><path d="M19.53 16.35 A8.7 8.7 0 0 1 12 20.7" fill="none" stroke="#36c2ff" stroke-width="4"/></svg><svg class="a" style="left:578px;top:181px;" width="12" height="8" viewBox="0 0 12 8"><path d="M1.2 1.2 L6 6 L10.8 1.2" fill="none" stroke="#5a5a5a" stroke-width="2"/></svg><svg class="a" style="left:612px;top:180px;" width="10" height="10" viewBox="0 0 10 10"><path d="M1 1 L9 9 M9 1 L1 9" stroke="#5a5a5a" stroke-width="2.1"/></svg><div class="a" style="left:640px;top:169px;width:286px;height:33px;background:#fff;border:1px solid #e3e3e3;box-sizing:border-box"></div><svg class="a" style="left:654px;top:177px;" width="16" height="16" viewBox="0 0 16 16"><circle cx="10" cy="5.5" r="4" fill="none" stroke="#8a8a8a" stroke-width="1"/><path d="M7 8.5 L1.5 14" stroke="#8a8a8a" stroke-width="1.1"/></svg></div><div class="bd"></div></div><div class="a" style="left:828px;top:427px;width:378px;height:160px;background:#fff;z-index:100;box-sizing:border-box;border:1px solid #acacac;box-shadow:0 0 3px rgba(0,0,0,0.1)"><div class="a" style="left:0;top:0;width:376px;height:158px;overflow:hidden"><span class="t" style="left:7.5px;top:7.7px;font-size:12.5px;line-height:16px;color:#222;transform-origin:0 50%;transform:scaleX(1.039);">Microsoft Windows</span><svg class="a" style="left:352.5px;top:8.5px;" width="12" height="12" viewBox="0 0 12 12"><path d="M0.5 0.5 L11.5 11.5 M11.5 0.5 L0.5 11.5" stroke="#222" stroke-width="1"/></svg><span class="t" style="left:5.5px;top:42.7px;font-size:16.5px;line-height:21px;color:#2154a3;transform-origin:0 50%;transform:scaleX(0.805);">ドライブ N: を使うにはフォーマットする必要があります。</span><span class="t" style="left:10.0px;top:83.0px;font-size:12px;line-height:15px;color:#1e1e1e;transform-origin:0 50%;transform:scaleX(0.781);">フォーマットしますか?</span><div class="a" style="left:0px;top:113px;width:376px;height:46px;background:#f0f0f0"></div><div class="a" style="left:134px;top:123px;width:138px;height:26px;background:#e1e1e1;border:1px solid #3d7fcf;box-shadow:inset 0 0 0 1px #eaf6ff;box-sizing:border-box"></div><span class="t" style="left:153.0px;top:128.5px;font-size:12px;line-height:15px;color:#1a1a1a;transform-origin:0 50%;transform:scaleX(0.758);">ディスクのフォーマット</span><div class="a" style="left:279px;top:123px;width:87px;height:26px;background:#e1e1e1;border:1px solid #adadad;box-sizing:border-box"></div><span class="t" style="left:298.0px;top:128.5px;font-size:12px;line-height:15px;color:#1a1a1a;transform-origin:0 50%;transform:scaleX(0.817);">キャンセル</span></div></div>
</body></html>
